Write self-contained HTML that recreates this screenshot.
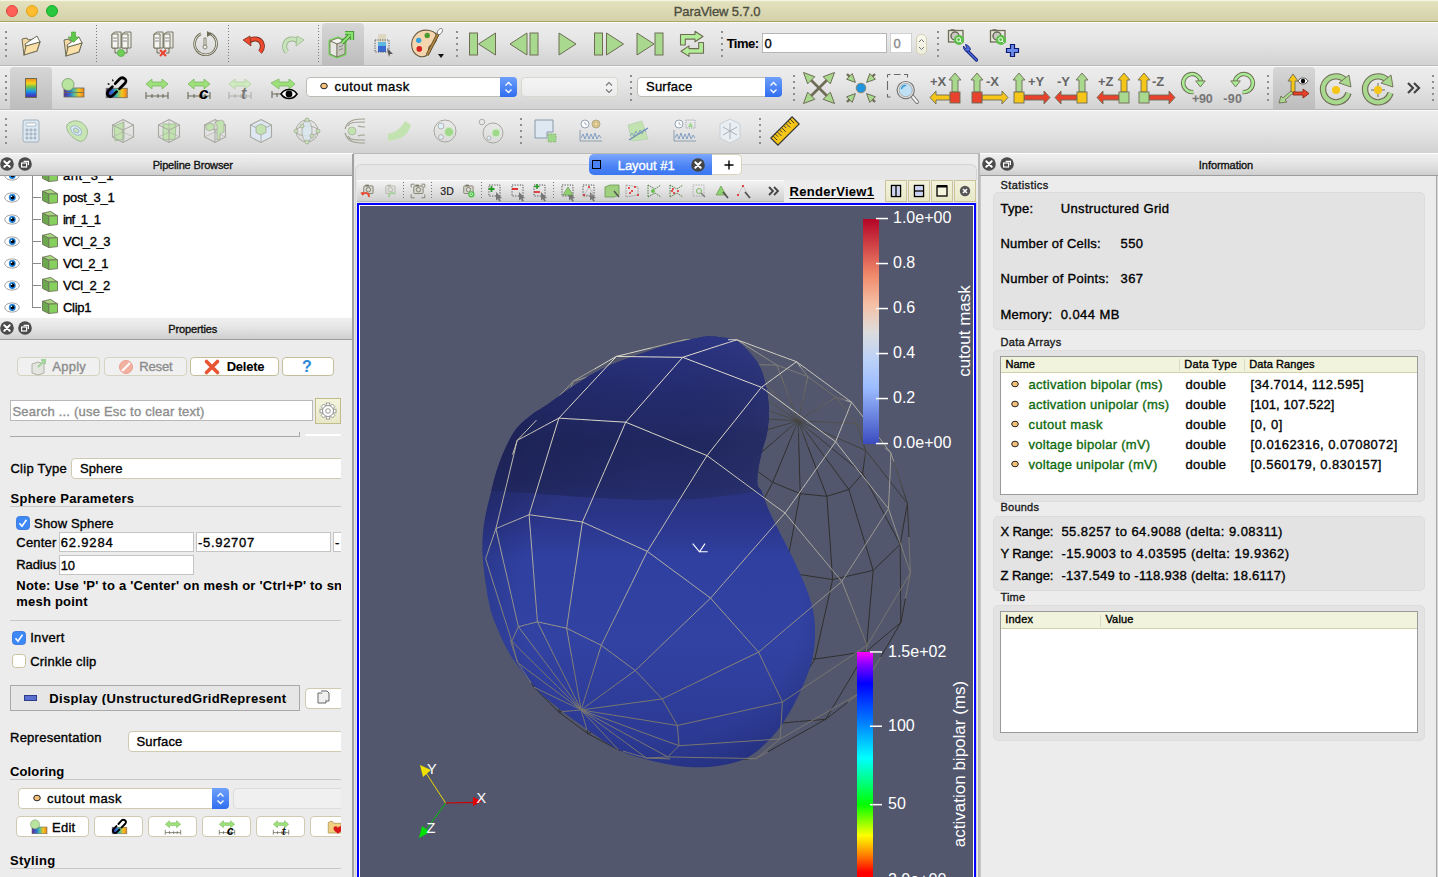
<!DOCTYPE html>
<html><head><meta charset="utf-8"><title>ParaView 5.7.0</title>
<style>
html,body{margin:0;padding:0;}
body{width:1438px;height:877px;overflow:hidden;position:relative;background:#ececec;font-family:"Liberation Sans", sans-serif;}
.t{position:absolute;white-space:pre;-webkit-text-stroke:0.35px currentColor;}
.r{position:absolute;box-sizing:border-box;}
.s{position:absolute;overflow:visible;}
</style></head><body>
<div class="r" style="left:0px;top:0px;width:1438px;height:22px;background:linear-gradient(#e6e4c2 0px,#e2e0bb 2px,#d3d0aa 21px);border-bottom:1px solid #aaa565;border-top:1px solid #f4f3e4;"></div>
<div class="r" style="left:6px;top:5px;width:12px;height:12px;border-radius:50%;background:#fe5f57;border:0.5px solid #e2463f;"></div>
<div class="r" style="left:26px;top:5px;width:12px;height:12px;border-radius:50%;background:#febc2e;border:0.5px solid #e1a116;"></div>
<div class="r" style="left:46px;top:5px;width:12px;height:12px;border-radius:50%;background:#28c840;border:0.5px solid #1aab29;"></div>
<div class="t" style="left:517.0px;width:400px;text-align:center;top:4.5px;font-size:13px;line-height:13px;font-weight:normal;color:#4d4d40;letter-spacing:-0.096px">ParaView 5.7.0</div>
<div class="r" style="left:0px;top:22px;width:1438px;height:44px;background:linear-gradient(#ededed,#e6e6e6 40%,#d2d2d2);border-top:1px solid #fafafa;border-bottom:1px solid #b9b9b9;"></div>
<div class="r" style="left:0px;top:66px;width:1438px;height:44px;background:linear-gradient(#ededed,#e6e6e6 40%,#d2d2d2);border-top:1px solid #fafafa;border-bottom:1px solid #b9b9b9;"></div>
<div class="r" style="left:0px;top:110px;width:1438px;height:44px;background:linear-gradient(#ededed,#e6e6e6 40%,#d2d2d2);border-top:1px solid #fafafa;border-bottom:1px solid #b9b9b9;"></div>
<div class="r" style="left:5px;top:31px;width:2.4px;height:2.4px;background:#8e8e8e;"></div>
<div class="r" style="left:5px;top:37px;width:2.4px;height:2.4px;background:#8e8e8e;"></div>
<div class="r" style="left:5px;top:43px;width:2.4px;height:2.4px;background:#8e8e8e;"></div>
<div class="r" style="left:5px;top:49px;width:2.4px;height:2.4px;background:#8e8e8e;"></div>
<div class="r" style="left:5px;top:55px;width:2.4px;height:2.4px;background:#8e8e8e;"></div>
<div class="r" style="left:456px;top:31px;width:2.4px;height:2.4px;background:#8e8e8e;"></div>
<div class="r" style="left:456px;top:37px;width:2.4px;height:2.4px;background:#8e8e8e;"></div>
<div class="r" style="left:456px;top:43px;width:2.4px;height:2.4px;background:#8e8e8e;"></div>
<div class="r" style="left:456px;top:49px;width:2.4px;height:2.4px;background:#8e8e8e;"></div>
<div class="r" style="left:456px;top:55px;width:2.4px;height:2.4px;background:#8e8e8e;"></div>
<div class="r" style="left:721px;top:31px;width:2.4px;height:2.4px;background:#8e8e8e;"></div>
<div class="r" style="left:721px;top:37px;width:2.4px;height:2.4px;background:#8e8e8e;"></div>
<div class="r" style="left:721px;top:43px;width:2.4px;height:2.4px;background:#8e8e8e;"></div>
<div class="r" style="left:721px;top:49px;width:2.4px;height:2.4px;background:#8e8e8e;"></div>
<div class="r" style="left:721px;top:55px;width:2.4px;height:2.4px;background:#8e8e8e;"></div>
<div class="r" style="left:937px;top:31px;width:2.4px;height:2.4px;background:#8e8e8e;"></div>
<div class="r" style="left:937px;top:37px;width:2.4px;height:2.4px;background:#8e8e8e;"></div>
<div class="r" style="left:937px;top:43px;width:2.4px;height:2.4px;background:#8e8e8e;"></div>
<div class="r" style="left:937px;top:49px;width:2.4px;height:2.4px;background:#8e8e8e;"></div>
<div class="r" style="left:937px;top:55px;width:2.4px;height:2.4px;background:#8e8e8e;"></div>
<div class="r" style="left:5px;top:75px;width:2.4px;height:2.4px;background:#8e8e8e;"></div>
<div class="r" style="left:5px;top:81px;width:2.4px;height:2.4px;background:#8e8e8e;"></div>
<div class="r" style="left:5px;top:87px;width:2.4px;height:2.4px;background:#8e8e8e;"></div>
<div class="r" style="left:5px;top:93px;width:2.4px;height:2.4px;background:#8e8e8e;"></div>
<div class="r" style="left:5px;top:99px;width:2.4px;height:2.4px;background:#8e8e8e;"></div>
<div class="r" style="left:630px;top:75px;width:2.4px;height:2.4px;background:#8e8e8e;"></div>
<div class="r" style="left:630px;top:81px;width:2.4px;height:2.4px;background:#8e8e8e;"></div>
<div class="r" style="left:630px;top:87px;width:2.4px;height:2.4px;background:#8e8e8e;"></div>
<div class="r" style="left:630px;top:93px;width:2.4px;height:2.4px;background:#8e8e8e;"></div>
<div class="r" style="left:630px;top:99px;width:2.4px;height:2.4px;background:#8e8e8e;"></div>
<div class="r" style="left:793px;top:75px;width:2.4px;height:2.4px;background:#8e8e8e;"></div>
<div class="r" style="left:793px;top:81px;width:2.4px;height:2.4px;background:#8e8e8e;"></div>
<div class="r" style="left:793px;top:87px;width:2.4px;height:2.4px;background:#8e8e8e;"></div>
<div class="r" style="left:793px;top:93px;width:2.4px;height:2.4px;background:#8e8e8e;"></div>
<div class="r" style="left:793px;top:99px;width:2.4px;height:2.4px;background:#8e8e8e;"></div>
<div class="r" style="left:1267px;top:75px;width:2.4px;height:2.4px;background:#8e8e8e;"></div>
<div class="r" style="left:1267px;top:81px;width:2.4px;height:2.4px;background:#8e8e8e;"></div>
<div class="r" style="left:1267px;top:87px;width:2.4px;height:2.4px;background:#8e8e8e;"></div>
<div class="r" style="left:1267px;top:93px;width:2.4px;height:2.4px;background:#8e8e8e;"></div>
<div class="r" style="left:1267px;top:99px;width:2.4px;height:2.4px;background:#8e8e8e;"></div>
<div class="r" style="left:1432px;top:75px;width:2.4px;height:2.4px;background:#8e8e8e;"></div>
<div class="r" style="left:1432px;top:81px;width:2.4px;height:2.4px;background:#8e8e8e;"></div>
<div class="r" style="left:1432px;top:87px;width:2.4px;height:2.4px;background:#8e8e8e;"></div>
<div class="r" style="left:1432px;top:93px;width:2.4px;height:2.4px;background:#8e8e8e;"></div>
<div class="r" style="left:1432px;top:99px;width:2.4px;height:2.4px;background:#8e8e8e;"></div>
<div class="r" style="left:5px;top:118px;width:2.4px;height:2.4px;background:#8e8e8e;"></div>
<div class="r" style="left:5px;top:124px;width:2.4px;height:2.4px;background:#8e8e8e;"></div>
<div class="r" style="left:5px;top:130px;width:2.4px;height:2.4px;background:#8e8e8e;"></div>
<div class="r" style="left:5px;top:136px;width:2.4px;height:2.4px;background:#8e8e8e;"></div>
<div class="r" style="left:5px;top:142px;width:2.4px;height:2.4px;background:#8e8e8e;"></div>
<div class="r" style="left:520px;top:118px;width:2.4px;height:2.4px;background:#8e8e8e;"></div>
<div class="r" style="left:520px;top:124px;width:2.4px;height:2.4px;background:#8e8e8e;"></div>
<div class="r" style="left:520px;top:130px;width:2.4px;height:2.4px;background:#8e8e8e;"></div>
<div class="r" style="left:520px;top:136px;width:2.4px;height:2.4px;background:#8e8e8e;"></div>
<div class="r" style="left:520px;top:142px;width:2.4px;height:2.4px;background:#8e8e8e;"></div>
<div class="r" style="left:759px;top:118px;width:2.4px;height:2.4px;background:#8e8e8e;"></div>
<div class="r" style="left:759px;top:124px;width:2.4px;height:2.4px;background:#8e8e8e;"></div>
<div class="r" style="left:759px;top:130px;width:2.4px;height:2.4px;background:#8e8e8e;"></div>
<div class="r" style="left:759px;top:136px;width:2.4px;height:2.4px;background:#8e8e8e;"></div>
<div class="r" style="left:759px;top:142px;width:2.4px;height:2.4px;background:#8e8e8e;"></div>
<div class="r" style="left:96px;top:25px;width:1px;height:38px;background:repeating-linear-gradient(#7a7a7a 0 1px,transparent 1px 3px);"></div>
<div class="r" style="left:228px;top:25px;width:1px;height:38px;background:repeating-linear-gradient(#7a7a7a 0 1px,transparent 1px 3px);"></div>
<div class="r" style="left:318px;top:25px;width:1px;height:38px;background:repeating-linear-gradient(#7a7a7a 0 1px,transparent 1px 3px);"></div>
<div class="r" style="left:322px;top:23px;width:42px;height:42px;background:linear-gradient(#d6d6d6,#bdbdbd);border-radius:4px 4px 0 0;"></div>
<div class="r" style="left:10px;top:67px;width:42px;height:42px;background:linear-gradient(#d6d6d6,#bdbdbd);border-radius:4px 4px 0 0;"></div>
<div class="r" style="left:1273px;top:67px;width:42px;height:42px;background:linear-gradient(#d6d6d6,#bdbdbd);border-radius:4px 4px 0 0;"></div>
<svg class="s" style="left:15.0px;top:29.0px;" width="32" height="32" viewBox="0 0 32 32"><g transform="translate(16.0,16.0)"><path d="M-9 -6L-4 -7L-3 -5L3 -6L3 4L-7 10Z" fill="#f3d9a3" stroke="#6e6c55" stroke-width="1"/><path d="M-6 -1L6 -9L9 -3L-5 3Z" fill="#fff" stroke="#6e6c55" stroke-width="1"/><path d="M-7 10L-5 1L9 -3L6 6Z" fill="#fbe0a8" stroke="#6e6c55" stroke-width="1.1"/></g></svg>
<svg class="s" style="left:57.0px;top:30.0px;" width="32" height="32" viewBox="0 0 32 32"><g transform="translate(16.0,16.0)"><path d="M-9 -6L-4 -7L-3 -5L3 -6L3 4L-7 10Z" fill="#f3d9a3" stroke="#6e6c55" stroke-width="1"/><path d="M-6 -1L6 -9L9 -3L-5 3Z" fill="#fff" stroke="#6e6c55" stroke-width="1"/><path d="M-7 10L-5 1L9 -3L6 6Z" fill="#fbe0a8" stroke="#6e6c55" stroke-width="1.1"/><path d="M-1.5 -14H2.5V-9H6L0.5 -3.5L-5 -9H-1.5Z" fill="#5fc84a" stroke="#4aa035" stroke-width="0.6"/></g></svg>
<svg class="s" style="left:105.0px;top:28.0px;" width="32" height="32" viewBox="0 0 32 32"><g transform="translate(16.0,16.0)"><g><path d="M-9 -10L-6 -12H0V4H-9Z" fill="#e8e8e4" stroke="#6e6c55" stroke-width="0.9"/><path d="M-9 -10H-3V4H-9Z" fill="#f4f4f0" stroke="#6e6c55" stroke-width="0.9"/><path d="M-8 -6H-4M-8 -3H-4" stroke="#777" stroke-width="0.8"/><path d="M1 -10L4 -12H10V4H1Z" fill="#e8e8e4" stroke="#6e6c55" stroke-width="0.9"/><path d="M1 -10H7V4H1Z" fill="#f4f4f0" stroke="#6e6c55" stroke-width="0.9"/><path d="M2 -6H6M2 -3H6" stroke="#777" stroke-width="0.8"/><path d="M-6 4V9H-3M3 9H6V4" stroke="#6e6c55" stroke-width="1" fill="none"/></g><circle cx="0" cy="9" r="3.6" fill="#6fcf5a" stroke="#4aa035" stroke-width="0.6"/></g></svg>
<svg class="s" style="left:147.0px;top:28.0px;" width="32" height="32" viewBox="0 0 32 32"><g transform="translate(16.0,16.0)"><g><path d="M-9 -10L-6 -12H0V4H-9Z" fill="#e8e8e4" stroke="#6e6c55" stroke-width="0.9"/><path d="M-9 -10H-3V4H-9Z" fill="#f4f4f0" stroke="#6e6c55" stroke-width="0.9"/><path d="M-8 -6H-4M-8 -3H-4" stroke="#777" stroke-width="0.8"/><path d="M1 -10L4 -12H10V4H1Z" fill="#e8e8e4" stroke="#6e6c55" stroke-width="0.9"/><path d="M1 -10H7V4H1Z" fill="#f4f4f0" stroke="#6e6c55" stroke-width="0.9"/><path d="M2 -6H6M2 -3H6" stroke="#777" stroke-width="0.8"/><path d="M-6 4V9H-3M3 9H6V4" stroke="#6e6c55" stroke-width="1" fill="none"/></g><path d="M-3 6L3 12M3 6L-3 12" stroke="#e8412c" stroke-width="2"/></g></svg>
<svg class="s" style="left:189.0px;top:28.0px;" width="32" height="32" viewBox="0 0 32 32"><g transform="translate(16.0,16.0)"><path d="M4.5 -10.5A11 11 0 1 1 -4 -10.2" fill="none" stroke="#6e6c55" stroke-width="2.6"/><path d="M4.5 -10.5A11 11 0 1 1 -4 -10.2" fill="none" stroke="#e4e4dc" stroke-width="1"/><path d="M2 -13L7 -10L2 -7Z" fill="#6e6c55"/><path d="M-1 -6H1V2H-1Z" fill="#f0f0ea" stroke="#6e6c55" stroke-width="0.8"/><circle cx="0" cy="3" r="2" fill="#f0f0ea" stroke="#6e6c55" stroke-width="0.8"/></g></svg>
<svg class="s" style="left:237.0px;top:28.0px;" width="32" height="32" viewBox="0 0 32 32"><g transform="translate(16.0,16.0)"><path d="M7 8C11 4 10 -4 3 -5C-1 -5.5 -4 -3 -5 -1" fill="none" stroke="#7a3020" stroke-width="5"/><path d="M7 8C11 4 10 -4 3 -5C-1 -5.5 -4 -3 -5 -1" fill="none" stroke="#f04a30" stroke-width="3.2"/><path d="M-10 -4L-3 -8L-2 2Z" fill="#f04a30" stroke="#7a3020" stroke-width="0.8"/></g></svg>
<svg class="s" style="left:278.0px;top:28.0px;" width="32" height="32" viewBox="0 0 32 32"><g transform="translate(16.0,16.0)"><g transform="scale(-1,1)"><path d="M7 8C11 4 10 -4 3 -5C-1 -5.5 -4 -3 -5 -1" fill="none" stroke="#9ab890" stroke-width="5"/><path d="M7 8C11 4 10 -4 3 -5C-1 -5.5 -4 -3 -5 -1" fill="none" stroke="#c9e4bb" stroke-width="3.2"/><path d="M-10 -4L-3 -8L-2 2Z" fill="#c9e4bb" stroke="#9ab890" stroke-width="0.8"/></g></g></svg>
<svg class="s" style="left:326.0px;top:28.0px;" width="32" height="32" viewBox="0 0 32 32"><g transform="translate(16.0,16.0)"><path d="M-12 -3L-4 -6L3 -3V10L-5 13L-12 10Z" fill="none" stroke="#7ad860" stroke-width="3.2" stroke-linejoin="round"/><path d="M-12 -3L-4 -6L3 -3L-5 0Z" fill="#f4f4f0" stroke="#6e6c55" stroke-width="0.8"/><path d="M-12 -3L-5 0V13L-12 10Z" fill="#e8e8e2" stroke="#6e6c55" stroke-width="0.8"/><path d="M-5 0L3 -3V10L-5 13Z" fill="#c8c8c0" stroke="#6e6c55" stroke-width="0.8"/><path d="M-3 3L1 1.5M-3 6L1 4.5" stroke="#777" stroke-width="0.8"/><path d="M0 -1L8 -9M3 -11H10V-4" stroke="#3c8a2c" stroke-width="4.2" fill="none"/><path d="M0 -1L8 -9M3 -11H10V-4" stroke="#8ae070" stroke-width="2.4" fill="none"/></g></svg>
<svg class="s" style="left:368.0px;top:28.0px;" width="32" height="32" viewBox="0 0 32 32"><g transform="translate(16.0,16.0)"><rect x="-6" y="-10" width="8" height="18" fill="url(#none)" stroke="none"/><path d="M-6 -10H2V-2H-6Z" fill="#ddd6c0"/><path d="M-6 -2H2V8H-6Z" fill="#3a6ad0"/><path d="M-6 -2H2V2H-6Z" fill="#5bb8e0"/><path d="M-9 -4H5V8H-9Z" fill="none" stroke="#555" stroke-width="1" stroke-dasharray="1.2 1.2"/><path d="M3 4L9 10L6 10L5 13Z" fill="#555"/></g></svg>
<svg class="s" style="left:410.0px;top:28.0px;" width="32" height="32" viewBox="0 0 32 32"><g transform="translate(16.0,16.0)"><g transform="scale(1.22)"><path d="M3 -11C-7 -13 -13 -5 -11.5 3C-10 10 -3 12 1 9C4 6 0 3 4 1C9 -1 12 -9 3 -11Z" fill="#f4d6ae" stroke="#6a5a40" stroke-width="0.9"/><circle cx="-6" cy="-3" r="2.2" fill="#35a0e0"/><circle cx="1" cy="-7" r="2.2" fill="#4a9a30"/><circle cx="-5.5" cy="4" r="2.3" fill="#d82020"/><path d="M10.5 -9.5L1 9" stroke="#5a4020" stroke-width="2.6"/><path d="M10.5 -9.5L1 9" stroke="#b08a40" stroke-width="1.4"/><path d="M9 -9C10 -13 14 -14 13.5 -11C13 -9 12 -8 10.5 -7.5Z" fill="#fff" stroke="#666" stroke-width="0.7"/></g><path d="M12 10L18 10L15 14Z" fill="#111"/></g></svg>
<svg class="s" style="left:466.0px;top:28.0px;" width="32" height="32" viewBox="0 0 32 32"><g transform="translate(16.0,16.0)"><rect x="-12.5" y="-11" width="8" height="22" fill="#a9d98e" stroke="#6e6c55" stroke-width="1"/><path d="M13.5 -11V11L-3.5 0Z" fill="#a9d98e" stroke="#6e6c55" stroke-width="1"/></g></svg>
<svg class="s" style="left:508.0px;top:28.0px;" width="32" height="32" viewBox="0 0 32 32"><g transform="translate(16.0,16.0)"><path d="M3 -11V11L-14 0Z" fill="#a9d98e" stroke="#6e6c55" stroke-width="1"/><rect x="6" y="-11" width="8" height="22" fill="#a9d98e" stroke="#6e6c55" stroke-width="1"/></g></svg>
<svg class="s" style="left:552.0px;top:28.0px;" width="32" height="32" viewBox="0 0 32 32"><g transform="translate(16.0,16.0)"><path d="M-9 -11V11L8 0Z" fill="#a9d98e" stroke="#6e6c55" stroke-width="1"/></g></svg>
<svg class="s" style="left:592.0px;top:28.0px;" width="32" height="32" viewBox="0 0 32 32"><g transform="translate(16.0,16.0)"><rect x="-13.5" y="-11" width="8" height="22" fill="#a9d98e" stroke="#6e6c55" stroke-width="1"/><path d="M-1.5 -11V11L15.5 0Z" fill="#a9d98e" stroke="#6e6c55" stroke-width="1"/></g></svg>
<svg class="s" style="left:634.0px;top:28.0px;" width="32" height="32" viewBox="0 0 32 32"><g transform="translate(16.0,16.0)"><path d="M-13 -11V11L4 0Z" fill="#a9d98e" stroke="#6e6c55" stroke-width="1"/><rect x="5" y="-11" width="8" height="22" fill="#a9d98e" stroke="#6e6c55" stroke-width="1"/></g></svg>
<svg class="s" style="left:670px;top:24px;" width="60" height="40" viewBox="0 0 60 40"><path d="M10.5 21V10.5H25V7.2L33 12.5L25 17.8V15.1H15.3V21Z" fill="#b2ec98" stroke="#6e6c55" stroke-width="1.1" stroke-linejoin="round"/><path d="M33.5 18.5V29.2H19V32.4L11 27.2L19 21.9V24.6H28.7V18.5Z" fill="#b2ec98" stroke="#6e6c55" stroke-width="1.1" stroke-linejoin="round"/></svg>
<div class="t" style="left:726.7px;top:37.0px;font-size:13px;line-height:13px;font-weight:bold;color:#000;letter-spacing:-0.534px;-webkit-text-stroke:0.05px currentColor;">Time:</div>
<div class="r" style="left:762px;top:33px;width:125px;height:20px;background:#fff;border:1px solid #b5b5b5;"></div>
<div class="t" style="left:764.5px;top:37.0px;font-size:13px;line-height:13px;font-weight:normal;color:#000;letter-spacing:0px;">0</div>
<div class="r" style="left:890px;top:33px;width:22px;height:20px;background:#fff;border:1px solid #d0d0d0;"></div>
<div class="t" style="left:893.5px;top:37.0px;font-size:13px;line-height:13px;font-weight:normal;color:#888;letter-spacing:0px;">0</div>
<div class="r" style="left:916px;top:34px;width:11px;height:21px;background:linear-gradient(#f8f8ee,#eeeedc);border:1px solid #d4d0b0;border-radius:5px;"></div>
<svg class="s" style="left:916px;top:34px;" width="11" height="21" viewBox="0 0 11 21"><path d="M3 8L5.5 5.5L8 8M3 13L5.5 15.5L8 13" stroke="#777" stroke-width="1" fill="none"/></svg>
<svg class="s" style="left:948px;top:30px;" width="32" height="30" viewBox="0 0 32 30"><rect x="0.5" y="0.5" width="14.5" height="11.5" fill="#e8e8e0" stroke="#6e6c55" stroke-width="1.3"/><rect x="2.5" y="-0.8" width="4" height="1.6" fill="#6e6c55"/><circle cx="7" cy="6" r="4" fill="#c8c8c0" stroke="#6a6a5a" stroke-width="1.5"/><circle cx="11" cy="10" r="5" fill="#5cc048"/><circle cx="10.6" cy="9.6" r="2" fill="none" stroke="#fff" stroke-width="1"/><path d="M12 11L13.8 12.8" stroke="#fff" stroke-width="1"/><path d="M18 19.5L28.5 30" stroke="#14207a" stroke-width="3.2" stroke-linecap="round"/><path d="M18 19.5L28.5 30" stroke="#4a6ad8" stroke-width="1.6" stroke-linecap="round"/><path d="M15.5 16C15 19 17.5 22 20.5 21.5L22.5 19.5C22 17 20 15 17.5 14.5L18.5 17.5L17.5 18.5Z" fill="#4a6ad8" stroke="#14207a" stroke-width="0.9"/></svg>
<svg class="s" style="left:990px;top:30px;" width="32" height="30" viewBox="0 0 32 30"><rect x="0.5" y="0.5" width="14.5" height="11.5" fill="#e8e8e0" stroke="#6e6c55" stroke-width="1.3"/><rect x="2.5" y="-0.8" width="4" height="1.6" fill="#6e6c55"/><circle cx="7" cy="6" r="4" fill="#c8c8c0" stroke="#6a6a5a" stroke-width="1.5"/><circle cx="11" cy="10" r="5" fill="#5cc048"/><circle cx="10.6" cy="9.6" r="2" fill="none" stroke="#fff" stroke-width="1"/><path d="M12 11L13.8 12.8" stroke="#fff" stroke-width="1"/><path d="M20.5 14.5H24.5V18.5H28.5V22.5H24.5V26.5H20.5V22.5H16.5V18.5H20.5Z" fill="#6a8ae8" stroke="#0e1a70" stroke-width="1.2"/></svg>
<svg class="s" style="left:0px;top:0px;" width="1" height="1" viewBox="0 0 1 1"><defs><linearGradient id="rbw" x1="0" y1="0" x2="0" y2="1"><stop offset="0" stop-color="#f28a1c"/><stop offset="0.25" stop-color="#f5d41a"/><stop offset="0.45" stop-color="#6cc24a"/><stop offset="0.65" stop-color="#1aa0e0"/><stop offset="0.85" stop-color="#2e4ed0"/><stop offset="1" stop-color="#5a2a9a"/></linearGradient><linearGradient id="rbh" x1="0" y1="0" x2="1" y2="0"><stop offset="0" stop-color="#5a2a9a"/><stop offset="0.3" stop-color="#2e6ed0"/><stop offset="0.5" stop-color="#4ac0a0"/><stop offset="0.75" stop-color="#f5c41a"/><stop offset="1" stop-color="#f2801c"/></linearGradient></defs></svg>
<svg class="s" style="left:14.5px;top:72.0px;" width="32" height="32" viewBox="0 0 32 32"><g transform="translate(16.0,16.0)"><rect x="-5.5" y="-9.5" width="11" height="19" fill="url(#rbw)" stroke="#6e6c55" stroke-width="1"/></g></svg>
<svg class="s" style="left:56.0px;top:72.0px;" width="32" height="32" viewBox="0 0 32 32"><g transform="translate(16.0,16.0)"><rect x="-8" y="0" width="20" height="9" fill="url(#rbh)" stroke="#6e6c55" stroke-width="0.8"/><path d="M-8 4.5H12" stroke="#6e6c55" stroke-width="0.8"/><circle cx="-4" cy="-3.5" r="6" fill="#b8e4a0" stroke="#7a9a6a" stroke-width="0.8"/></g></svg>
<svg class="s" style="left:100.0px;top:72.0px;" width="32" height="32" viewBox="0 0 32 32"><g transform="translate(16.0,16.0)"><rect x="-9.8" y="0.3" width="21" height="9.4" fill="url(#rbh)" stroke="#6e6c55" stroke-width="0.8"/><path d="M-0.8 -4.3L3.5 -9C6.5 -12 12 -8.5 9.2 -5L3.5 0.8" stroke="#000" stroke-width="2.7" fill="none" stroke-linecap="round"/><path d="M-3.6 -1.3L-7.8 3C-10.5 6.5 -6 10.5 -3 7.2L0.6 3.6" stroke="#000" stroke-width="2.7" fill="none" stroke-linecap="round"/><path d="M-8.3 -4.4L-6.5 -3.6M-3.6 -8.6L-2.8 -6.8" stroke="#000" stroke-width="1.2"/></g></svg>
<svg class="s" style="left:141.0px;top:72.0px;" width="32" height="32" viewBox="0 0 32 32"><g transform="translate(16.0,16.0)"><path d="M-11 -4L-5 -9V-6H5V-9L11 -4L5 1V-2H-5V1Z" fill="#9ee07a" stroke="#7ab860" stroke-width="0.8"/><path d="M-11 8H11M-11 4V11M-5 6V10M1 6V10M6 6V10M11 4V11" stroke="#6a6a5a" stroke-width="1.1" fill="none"/></g></svg>
<svg class="s" style="left:183.0px;top:72.0px;" width="32" height="32" viewBox="0 0 32 32"><g transform="translate(16.0,16.0)"><path d="M-11 -4L-5 -9V-6H5V-9L11 -4L5 1V-2H-5V1Z" fill="#9ee07a" stroke="#7ab860" stroke-width="0.8"/><path d="M-11 8H11M-11 4V11M-5 6V10M1 6V10M6 6V10M11 4V11" stroke="#6a6a5a" stroke-width="1.1" fill="none"/><text x="0" y="11" font-family="Liberation Sans" font-size="17" font-weight="bold" font-style="italic" fill="#000">c</text></g></svg>
<svg class="s" style="left:224.0px;top:72.0px;" width="32" height="32" viewBox="0 0 32 32"><g transform="translate(16.0,16.0)"><path d="M-11 -4L-5 -9V-6H5V-9L11 -4L5 1V-2H-5V1Z" fill="#cfeabf" stroke="#b0d0a0" stroke-width="0.8"/><path d="M-11 8H11M-11 4V11M-5 6V10M1 6V10M6 6V10M11 4V11" stroke="#b0b0a8" stroke-width="1.1" fill="none"/><text x="1" y="11" font-family="Liberation Sans" font-size="16" font-weight="bold" font-style="italic" fill="#777">t</text></g></svg>
<svg class="s" style="left:268.0px;top:72.0px;" width="32" height="32" viewBox="0 0 32 32"><g transform="translate(16.0,16.0)"><path d="M-13 -5L-5 -9V-6H5V-9L11 -4L5 1V-2H-5V1Z" fill="#9ee07a" stroke="#7ab860" stroke-width="0.8"/><path d="M-12 6H-3M-12 3V10M-7 5V9" stroke="#6a6a5a" stroke-width="1.1" fill="none"/><path d="M-3 6C1 0 9 0 13 6C9 12 1 12 -3 6Z" fill="#fff" stroke="#000" stroke-width="1.6"/><circle cx="5" cy="6" r="3.4" fill="#000"/></g></svg>
<div class="r" style="left:306px;top:77px;width:211px;height:20px;background:#fff;border:1px solid #bdbdb5;border-radius:4px;"></div>
<div class="r" style="left:500px;top:77px;width:17px;height:20px;background:linear-gradient(#6da0fb,#2f6df0);border-radius:0 4px 4px 0;"></div>
<svg class="s" style="left:502px;top:79px;" width="13" height="16" viewBox="0 0 13 16"><path d="M3.5 6.5L6.5 3.5L9.5 6.5M3.5 10.5L6.5 13.5L9.5 10.5" stroke="#fff" stroke-width="1.3" fill="none"/></svg>
<svg class="s" style="left:319px;top:81px;" width="10" height="10" viewBox="0 0 10 10"><ellipse cx="5" cy="5" rx="3.3" ry="2.8" fill="#f6c27a" stroke="#222" stroke-width="1"/></svg>
<div class="t" style="left:334.5px;top:79.7px;font-size:13px;line-height:13px;font-weight:normal;color:#000;letter-spacing:0.461px;">cutout mask</div>
<div class="r" style="left:521px;top:77px;width:97px;height:20px;background:linear-gradient(#f4f4f4,#ececec);border:1px solid #d8d8d0;border-radius:4px;"></div>
<svg class="s" style="left:603px;top:79px;" width="12" height="16" viewBox="0 0 12 16"><path d="M3 6.5L6 3.5L9 6.5M3 10.5L6 13.5L9 10.5" stroke="#777" stroke-width="1.1" fill="none"/></svg>
<div class="r" style="left:637px;top:77px;width:145px;height:20px;background:#fff;border:1px solid #bdbdb5;border-radius:4px;"></div>
<div class="r" style="left:765px;top:77px;width:17px;height:20px;background:linear-gradient(#6da0fb,#2f6df0);border-radius:0 4px 4px 0;"></div>
<svg class="s" style="left:767px;top:79px;" width="13" height="16" viewBox="0 0 13 16"><path d="M3.5 6.5L6.5 3.5L9.5 6.5M3.5 10.5L6.5 13.5L9.5 10.5" stroke="#fff" stroke-width="1.3" fill="none"/></svg>
<div class="t" style="left:646.0px;top:79.7px;font-size:13px;line-height:13px;font-weight:normal;color:#000;letter-spacing:0.231px;">Surface</div>
<svg class="s" style="left:801.3px;top:69.8px;" width="36" height="36" viewBox="0 0 36 36"><g transform="translate(18.0,18.0)"><path d="M-10 -10L10 10M10 -10L-10 10" stroke="#6e6c55" stroke-width="2.6"/><path d="M-15.5 -15.5L-4.2 -11.3L-11.3 -4.2Z" fill="#a9d98e" stroke="#6e6c55" stroke-width="1" stroke-linejoin="round"/><path d="M-15.5 15.5L-11.3 4.2L-4.2 11.3Z" fill="#a9d98e" stroke="#6e6c55" stroke-width="1" stroke-linejoin="round"/><path d="M15.5 -15.5L11.3 -4.2L4.2 -11.3Z" fill="#a9d98e" stroke="#6e6c55" stroke-width="1" stroke-linejoin="round"/><path d="M15.5 15.5L4.2 11.3L11.3 4.2Z" fill="#a9d98e" stroke="#6e6c55" stroke-width="1" stroke-linejoin="round"/></g></svg>
<svg class="s" style="left:843.0px;top:69.8px;" width="36" height="36" viewBox="0 0 36 36"><g transform="translate(18.0,18.0)"><path d="M-14 -14L-10 -10" stroke="#6e6c55" stroke-width="2.4"/><path d="M-5.6 -5.6L-14.4 -8.8L-8.8 -14.4Z" fill="#a9d98e" stroke="#6e6c55" stroke-width="1" stroke-linejoin="round"/><path d="M-14 14L-10 10" stroke="#6e6c55" stroke-width="2.4"/><path d="M-5.6 5.6L-8.8 14.4L-14.4 8.8Z" fill="#a9d98e" stroke="#6e6c55" stroke-width="1" stroke-linejoin="round"/><path d="M14 -14L10 -10" stroke="#6e6c55" stroke-width="2.4"/><path d="M5.6 -5.6L8.8 -14.4L14.4 -8.8Z" fill="#a9d98e" stroke="#6e6c55" stroke-width="1" stroke-linejoin="round"/><path d="M14 14L10 10" stroke="#6e6c55" stroke-width="2.4"/><path d="M5.6 5.6L14.4 8.8L8.8 14.4Z" fill="#a9d98e" stroke="#6e6c55" stroke-width="1" stroke-linejoin="round"/><circle cx="0" cy="0" r="4.8" fill="#2196e0" stroke="#8a7a50" stroke-width="0.8"/></g></svg>
<svg class="s" style="left:880.0px;top:70.0px;" width="40" height="36" viewBox="0 0 40 36"><g transform="translate(20.0,18.0)"><path d="M-12.5 -13.5H-9.5M-6 -13.5H0.5M4 -13.5H7.5V-10.5M-12.5 -13.5V-10.5M-12.5 -7V2M-12.5 6V9H-9.5" stroke="#6a6a6a" stroke-width="1.1" fill="none"/><path d="M12.5 8.5L17 14" stroke="#777" stroke-width="4" stroke-linecap="round"/><path d="M12.5 8.5L17 14" stroke="#f4f4f4" stroke-width="2" stroke-linecap="round"/><circle cx="5.7" cy="2.1" r="8.6" fill="#eee" stroke="#777" stroke-width="1.2"/><circle cx="5.7" cy="2.1" r="6.6" fill="#bfe0f4" stroke="#999" stroke-width="0.8"/><path d="M1.5 1A4.5 4.5 0 0 1 6 -2.5" stroke="#2a9ae0" stroke-width="1.6" fill="none"/></g></svg>
<svg class="s" style="left:924.0px;top:70.0px;" width="44" height="36" viewBox="0 0 44 36"><g transform="translate(22.0,18.0)"><path d="M6 4V-8H3L9 -15L15 -8H12V4Z" fill="#a9d98e" stroke="#6e6c55" stroke-width="0.9"/><path d="M4 7H-10V3L-16 9.5L-10 16V12H4Z" fill="#f5c518" stroke="#6e6c55" stroke-width="0.9"/><rect x="4" y="4" width="10" height="11" fill="#e8412c" stroke="#6e6c55" stroke-width="0.9"/><text x="-16" y="-2" font-family="Liberation Sans" font-size="13" font-weight="bold" fill="#666">+X</text></g></svg>
<svg class="s" style="left:964.0px;top:70.0px;" width="44" height="36" viewBox="0 0 44 36"><g transform="translate(22.0,18.0)"><path d="M-12 4V-8H-15L-9 -15L-3 -8H-6V4Z" fill="#a9d98e" stroke="#6e6c55" stroke-width="0.9"/><path d="M-4 7H16V3L22 9.5L16 16V12H-4Z" fill="#f5c518" stroke="#6e6c55" stroke-width="0.9"/><rect x="-14" y="4" width="10" height="11" fill="#e8412c" stroke="#6e6c55" stroke-width="0.9"/><text x="0" y="-2" font-family="Liberation Sans" font-size="13" font-weight="bold" fill="#666">-X</text></g></svg>
<svg class="s" style="left:1006.0px;top:70.0px;" width="44" height="36" viewBox="0 0 44 36"><g transform="translate(22.0,18.0)"><path d="M-12 4V-8H-15L-9 -15L-3 -8H-6V4Z" fill="#a9d98e" stroke="#6e6c55" stroke-width="0.9"/><path d="M-4 7H16V3L22 9.5L16 16V12H-4Z" fill="#e8412c" stroke="#6e6c55" stroke-width="0.9"/><rect x="-14" y="4" width="10" height="11" fill="#f5c518" stroke="#6e6c55" stroke-width="0.9"/><text x="0" y="-2" font-family="Liberation Sans" font-size="13" font-weight="bold" fill="#666">+Y</text></g></svg>
<svg class="s" style="left:1049.0px;top:70.0px;" width="44" height="36" viewBox="0 0 44 36"><g transform="translate(22.0,18.0)"><path d="M8 4V-8H5L11 -15L17 -8H14V4Z" fill="#a9d98e" stroke="#6e6c55" stroke-width="0.9"/><path d="M6 7H-10V3L-16 9.5L-10 16V12H6Z" fill="#e8412c" stroke="#6e6c55" stroke-width="0.9"/><rect x="6" y="4" width="10" height="11" fill="#f5c518" stroke="#6e6c55" stroke-width="0.9"/><text x="-14" y="-2" font-family="Liberation Sans" font-size="13" font-weight="bold" fill="#666">-Y</text></g></svg>
<svg class="s" style="left:1091.0px;top:70.0px;" width="44" height="36" viewBox="0 0 44 36"><g transform="translate(22.0,18.0)"><path d="M8 4V-8H5L11 -15L17 -8H14V4Z" fill="#f5c518" stroke="#6e6c55" stroke-width="0.9"/><path d="M6 7H-10V3L-16 9.5L-10 16V12H6Z" fill="#e8412c" stroke="#6e6c55" stroke-width="0.9"/><rect x="6" y="4" width="10" height="11" fill="#a9d98e" stroke="#6e6c55" stroke-width="0.9"/><text x="-15" y="-2" font-family="Liberation Sans" font-size="13" font-weight="bold" fill="#666">+Z</text></g></svg>
<svg class="s" style="left:1131.0px;top:70.0px;" width="44" height="36" viewBox="0 0 44 36"><g transform="translate(22.0,18.0)"><path d="M-12 4V-8H-15L-9 -15L-3 -8H-6V4Z" fill="#f5c518" stroke="#6e6c55" stroke-width="0.9"/><path d="M-4 7H16V3L22 9.5L16 16V12H-4Z" fill="#e8412c" stroke="#6e6c55" stroke-width="0.9"/><rect x="-14" y="4" width="10" height="11" fill="#a9d98e" stroke="#6e6c55" stroke-width="0.9"/><text x="-1" y="-2" font-family="Liberation Sans" font-size="13" font-weight="bold" fill="#666">-Z</text></g></svg>
<svg class="s" style="left:1176.3px;top:66.7px;" width="32" height="32" viewBox="0 0 32 32"><g transform="translate(16.0,16.0)"><path d="M9 -1.5A9 9 0 1 0 1.3 9" fill="none" stroke="#6e6c55" stroke-width="4.4"/><path d="M9 -1.5A9 9 0 1 0 1.3 9" fill="none" stroke="#a8ec94" stroke-width="2.6"/><path d="M3.7 -2.1L13.2 -2.1L8.4 3.9Z" fill="#a8ec94" stroke="#6e6c55" stroke-width="0.9" stroke-linejoin="round"/></g></svg>
<svg class="s" style="left:1227.7px;top:66.7px;" width="32" height="32" viewBox="0 0 32 32"><g transform="translate(16.0,16.0)"><g transform="scale(-1,1)"><path d="M9 -1.5A9 9 0 1 0 1.3 9" fill="none" stroke="#6e6c55" stroke-width="4.4"/><path d="M9 -1.5A9 9 0 1 0 1.3 9" fill="none" stroke="#a8ec94" stroke-width="2.6"/><path d="M3.7 -2.1L13.2 -2.1L8.4 3.9Z" fill="#a8ec94" stroke="#6e6c55" stroke-width="0.9" stroke-linejoin="round"/></g></g></svg>
<div class="t" style="left:1191.9px;top:92.9px;font-size:12.5px;line-height:12.5px;font-weight:bold;color:#777;letter-spacing:-0.152px;-webkit-text-stroke:0.05px currentColor;">+90</div>
<div class="t" style="left:1223.2px;top:92.9px;font-size:12.5px;line-height:12.5px;font-weight:bold;color:#777;letter-spacing:0.369px;-webkit-text-stroke:0.05px currentColor;">-90</div>
<svg class="s" style="left:1277.0px;top:72.0px;" width="32" height="32" viewBox="0 0 32 32"><g transform="translate(16.0,16.0)"><path d="M-2 4V-7H-5L0 -14L5 -7H2V4Z" fill="#f5c518" stroke="#6e6c55" stroke-width="0.9"/><path d="M0 4H10V1L16 5.5L10 10V7H0Z" fill="#e8412c" stroke="#8a2a1a" stroke-width="0.9"/><path d="M0 5L-8 12L-6 14L-14 15L-12 8L-10 10L-2 3Z" fill="#a9d98e" stroke="#6e6c55" stroke-width="0.9"/><path d="M5 -7C7 -11 13 -11 15 -7C13 -3 7 -3 5 -7Z" fill="#fff" stroke="#333" stroke-width="0.8"/><circle cx="10" cy="-7" r="2.2" fill="#000"/></g></svg>
<svg class="s" style="left:1318.0px;top:71.0px;" width="36" height="36" viewBox="0 0 36 36"><g transform="translate(18.0,18.0)"><path d="M10 -8A13 13 0 1 0 12.5 4" fill="none" stroke="#6e6c55" stroke-width="6.4"/><path d="M10 -8A13 13 0 1 0 12.5 4" fill="none" stroke="#a9d98e" stroke-width="4.2"/><path d="M3 -6L15 -2L13 -14Z" fill="#a9d98e" stroke="#6e6c55" stroke-width="0.9"/><circle cx="0" cy="1" r="4" fill="#f5c518"/></g></svg>
<svg class="s" style="left:1360.0px;top:71.0px;" width="36" height="36" viewBox="0 0 36 36"><g transform="translate(18.0,18.0)"><path d="M10 -8A13 13 0 1 0 12.5 4" fill="none" stroke="#6e6c55" stroke-width="6.4"/><path d="M10 -8A13 13 0 1 0 12.5 4" fill="none" stroke="#a9d98e" stroke-width="4.2"/><path d="M3 -6L15 -2L13 -14Z" fill="#a9d98e" stroke="#6e6c55" stroke-width="0.9"/><path d="M-7 1H7M0 -6V8" stroke="#6e6c55" stroke-width="1"/><circle cx="0" cy="1" r="4" fill="#f5c518"/></g></svg>
<svg class="s" style="left:1398.0px;top:72.0px;" width="32" height="32" viewBox="0 0 32 32"><g transform="translate(16.0,16.0)"><path d="M-6 -5L-1 0L-6 5M0 -5L5 0L0 5" stroke="#444" stroke-width="2.2" fill="none"/></g></svg>
<svg class="s" style="left:15.0px;top:115.0px;" width="32" height="32" viewBox="0 0 32 32"><g transform="translate(16.0,16.0)"><rect x="-8" y="-11" width="16" height="22" rx="2" fill="#dce8f2" stroke="#a0b0bc" stroke-width="1"/><rect x="-5" y="-8" width="10" height="3" rx="1" fill="#fff" stroke="#a0b0bc" stroke-width="0.8"/><circle cx="-4" cy="-1" r="1.1" fill="none" stroke="#8a9aa8" stroke-width="0.8"/><circle cx="-4" cy="3" r="1.1" fill="none" stroke="#8a9aa8" stroke-width="0.8"/><circle cx="-4" cy="7" r="1.1" fill="none" stroke="#8a9aa8" stroke-width="0.8"/><circle cx="0" cy="-1" r="1.1" fill="none" stroke="#8a9aa8" stroke-width="0.8"/><circle cx="0" cy="3" r="1.1" fill="none" stroke="#8a9aa8" stroke-width="0.8"/><circle cx="0" cy="7" r="1.1" fill="none" stroke="#8a9aa8" stroke-width="0.8"/><circle cx="4" cy="-1" r="1.1" fill="none" stroke="#8a9aa8" stroke-width="0.8"/><circle cx="4" cy="3" r="1.1" fill="none" stroke="#8a9aa8" stroke-width="0.8"/><circle cx="4" cy="7" r="1.1" fill="none" stroke="#8a9aa8" stroke-width="0.8"/></g></svg>
<svg class="s" style="left:61.0px;top:115.0px;" width="32" height="32" viewBox="0 0 32 32"><g transform="translate(16.0,16.0)"><path d="M-10 -6C-6 -12 6 -12 10 -2C12 6 6 12 2 10C-4 8 -12 0 -10 -6Z" fill="#c8e6b4" stroke="#9ab890" stroke-width="1"/><ellipse cx="-1" cy="0" rx="6" ry="4" fill="#e0eef8" stroke="#a0b8c8" transform="rotate(35)"/><ellipse cx="-1" cy="0" rx="3" ry="2" fill="#c8e6b4" stroke="#a0b8c8" transform="rotate(35)"/></g></svg>
<svg class="s" style="left:107.0px;top:115.0px;" width="32" height="32" viewBox="0 0 32 32"><g transform="translate(16.0,16.0)"><path d="M-9 -5L1 -9V8L-8 10Z" fill="#c2e2b0" stroke="#9ab890" stroke-width="0.8"/><path d="M0 -11.5L10.5 -6V6L0 11.5L-10.5 6V-6Z" fill="none" stroke="#a8a8a0" stroke-width="1.1"/><path d="M-10.5 -6L0 -1V11.5M0 -1L10.5 -6" fill="none" stroke="#a8a8a0" stroke-width="1"/><path d="M0 -11.5V1L-10.5 6M0 1L10.5 6" fill="none" stroke="#a8a8a0" stroke-width="0.7" opacity="0.8"/></g></svg>
<svg class="s" style="left:152.5px;top:115.0px;" width="32" height="32" viewBox="0 0 32 32"><g transform="translate(16.0,16.0)"><path d="M-6 -7L7 -7L6 8L-6 9Z" fill="#c2e2b0" stroke="#9ab890" stroke-width="0.8"/><path d="M0 -11.5L10.5 -6V6L0 11.5L-10.5 6V-6Z" fill="none" stroke="#a8a8a0" stroke-width="1.1"/><path d="M-10.5 -6L0 -1V11.5M0 -1L10.5 -6" fill="none" stroke="#a8a8a0" stroke-width="1"/><path d="M0 -11.5V1L-10.5 6M0 1L10.5 6" fill="none" stroke="#a8a8a0" stroke-width="0.7" opacity="0.8"/></g></svg>
<svg class="s" style="left:199.0px;top:115.0px;" width="32" height="32" viewBox="0 0 32 32"><g transform="translate(16.0,16.0)"><path d="M0 -11.5L10.5 -6V6L0 11.5L-10.5 6V-6Z" fill="none" stroke="#a8a8a0" stroke-width="1.1"/><path d="M-10.5 -6L0 -1V11.5M0 -1L10.5 -6" fill="none" stroke="#a8a8a0" stroke-width="1"/><path d="M0 -11.5V1L-10.5 6M0 1L10.5 6" fill="none" stroke="#a8a8a0" stroke-width="0.7" opacity="0.8"/><path d="M-9 -6L-4 -8L-1 -6.5V-2L-6 0L-9 -2Z" fill="#c2e2b0" stroke="#a8a8a0" stroke-width="0.8"/><path d="M0 -9L6 -11L9 -9.5V1L5 3V8L2 9V-5Z" fill="#c2e2b0" stroke="#a8a8a0" stroke-width="0.8"/></g></svg>
<svg class="s" style="left:245.0px;top:115.0px;" width="32" height="32" viewBox="0 0 32 32"><g transform="translate(16.0,16.0)"><path d="M0 -11.5L10.5 -6V6L0 11.5L-10.5 6V-6Z" fill="#dde8f2" stroke="#a8a8a0" stroke-width="1.1"/><path d="M-10.5 -6L0 -1V11.5M0 -1L10.5 -6" fill="none" stroke="#a8a8a0" stroke-width="0.9"/><path d="M0 -7L5 -4.5V1.5L0 4L-5 1.5V-4.5Z" fill="#c2e2b0" stroke="#a8a8a0" stroke-width="0.8"/></g></svg>
<svg class="s" style="left:290.5px;top:115.0px;" width="32" height="32" viewBox="0 0 32 32"><g transform="translate(16.0,16.0)"><circle r="11" fill="none" stroke="#a8a8a0" stroke-width="1"/><ellipse rx="11" ry="5" fill="none" stroke="#a8a8a0" stroke-width="1"/><ellipse rx="5" ry="11" fill="#d8e8f0" stroke="#a8a8a0" stroke-width="1" opacity="0.8"/><circle cx="0" cy="-11" r="2" fill="#c2e2b0" stroke="#a8a8a0" stroke-width="0.8"/><circle cx="0" cy="11" r="2" fill="#c2e2b0" stroke="#a8a8a0" stroke-width="0.8"/><circle cx="-11" cy="0" r="2" fill="#c2e2b0" stroke="#a8a8a0" stroke-width="0.8"/><circle cx="11" cy="0" r="2" fill="#c2e2b0" stroke="#a8a8a0" stroke-width="0.8"/><circle cx="-5" cy="-5" r="2" fill="#c2e2b0" stroke="#a8a8a0" stroke-width="0.8"/><circle cx="5" cy="5" r="2" fill="#c2e2b0" stroke="#a8a8a0" stroke-width="0.8"/></g></svg>
<svg class="s" style="left:337.5px;top:115.0px;" width="32" height="32" viewBox="0 0 32 32"><g transform="translate(16.0,16.0)"><path d="M-6 -5C-4 -9 0 -9 11 -9M-9 -2C-6 -12 2 -12 11 -12M-6 5C-4 9 0 9 11 9M-9 2C-6 12 2 12 11 12M4 -5C6 -4 8 -4 11 -4M4 5C6 4 8 4 11 4" stroke="#a0a090" stroke-width="1.2" fill="none"/><circle cx="-2" cy="0" r="4" fill="#c2e2b0" stroke="#a8b8a0" stroke-width="0.8"/></g></svg>
<svg class="s" style="left:383.0px;top:115.0px;" width="32" height="32" viewBox="0 0 32 32"><g transform="translate(16.0,16.0)"><path d="M-11 3C-5 2 2 -2 6 -10L12 -6C8 6 2 8 -11 10Z" fill="#c2e2b0"/></g></svg>
<svg class="s" style="left:429.0px;top:115.0px;" width="32" height="32" viewBox="0 0 32 32"><g transform="translate(16.0,16.0)"><circle r="11" fill="none" stroke="#a8a8a0" stroke-width="1"/><circle cx="-4" cy="-5" r="3" fill="#e0eef8" stroke="#a8a8a0" stroke-width="0.8"/><circle cx="-4" cy="6" r="2.4" fill="#e0eef8" stroke="#a8a8a0" stroke-width="0.8"/><circle cx="4" cy="1" r="4.5" fill="#9fd88a" stroke="#d0ecc0" stroke-width="1"/></g></svg>
<svg class="s" style="left:474.5px;top:115.0px;" width="32" height="32" viewBox="0 0 32 32"><g transform="translate(16.0,16.0)"><circle cx="2" cy="2" r="10" fill="none" stroke="#a8a8a0" stroke-width="1"/><circle cx="-9" cy="-9" r="2.8" fill="none" stroke="#a8a8a0" stroke-width="0.9"/><circle cx="-2" cy="7" r="2" fill="#e0eef8" stroke="#a8a8a0" stroke-width="0.8"/><circle cx="5" cy="2" r="4" fill="#9fd88a" stroke="#d0ecc0" stroke-width="1"/></g></svg>
<svg class="s" style="left:530.0px;top:115.0px;" width="32" height="32" viewBox="0 0 32 32"><g transform="translate(16.0,16.0)"><path d="M-11 -11H7V1H1V7H-11Z" fill="#dde8f2" stroke="#8898a8" stroke-width="1"/><rect x="2" y="3" width="8" height="8" fill="#9fd88a" stroke="#80a870" stroke-width="0.8" stroke-dasharray="1.5 1"/></g></svg>
<svg class="s" style="left:575.0px;top:115.0px;" width="32" height="32" viewBox="0 0 32 32"><g transform="translate(16.0,16.0)"><circle cx="-6" cy="-7" r="4" fill="#fff" stroke="#8898a8" stroke-width="0.9"/><path d="M-6 -9V-7L-4 -6" stroke="#8898a8" stroke-width="0.8" fill="none"/><circle cx="5" cy="-7" r="4" fill="#f5d898" stroke="#a8a080" stroke-width="0.9"/><rect x="3" y="-9" width="4" height="4" fill="none" stroke="#a8a080" stroke-width="0.7"/><path d="M-10 7L-8 3L-6 8L-4 2L-2 8L0 3L2 8L4 2L6 8L8 4L10 7" stroke="#7a98c0" stroke-width="0.9" fill="none"/><path d="M-11 -1V10H11" stroke="#8898a8" stroke-width="0.9" fill="none"/></g></svg>
<svg class="s" style="left:622.0px;top:115.0px;" width="32" height="32" viewBox="0 0 32 32"><g transform="translate(16.0,16.0)"><path d="M-10 -6L4 -10L10 8L-6 10Z" fill="#c2e2b0" stroke="#b8d0b0" stroke-width="0.8"/><path d="M-9 9L10 -3" stroke="#6a88b8" stroke-width="1.2"/><path d="M-8 5L-6 2L-4 5L-2 0L0 4L2 -1L4 3L6 -2L8 1" stroke="#7a98c0" stroke-width="0.8" fill="none"/></g></svg>
<svg class="s" style="left:668.5px;top:115.0px;" width="32" height="32" viewBox="0 0 32 32"><g transform="translate(16.0,16.0)"><circle cx="-6" cy="-7" r="4" fill="#fff" stroke="#8898a8" stroke-width="0.9"/><path d="M-6 -9V-7L-4 -6" stroke="#8898a8" stroke-width="0.8" fill="none"/><rect x="1" y="-11" width="9" height="8" fill="none" stroke="#8898a8" stroke-width="0.8" stroke-dasharray="1.2 1"/><path d="M3 -4L5.5 -9L8 -4Z" fill="#9fd88a"/><path d="M-10 7L-8 3L-6 8L-4 2L-2 8L0 3L2 8L4 2L6 8L8 4L10 7" stroke="#7a98c0" stroke-width="0.9" fill="none"/><path d="M-11 -1V10H11" stroke="#8898a8" stroke-width="0.9" fill="none"/></g></svg>
<svg class="s" style="left:714.0px;top:115.0px;" width="32" height="32" viewBox="0 0 32 32"><g transform="translate(16.0,16.0)"><path d="M0 -12L10 -7V7L0 12L-10 7V-7Z" fill="#e8eef2" stroke="#c8d0d8" stroke-width="1"/><path d="M0 -8V8M-7 -4L7 4M-7 4L7 -4" stroke="#a8b0b8" stroke-width="1"/></g></svg>
<svg class="s" style="left:769.0px;top:115.0px;" width="32" height="32" viewBox="0 0 32 32"><g transform="translate(16.0,16.0)"><g transform="rotate(-45)"><rect x="-15" y="-5" width="30" height="10" fill="#f5c518" stroke="#333" stroke-width="1.2"/><path d="M-12 -5V1" stroke="#333" stroke-width="0.9"/><path d="M-9 -5V-1" stroke="#333" stroke-width="0.9"/><path d="M-6 -5V1" stroke="#333" stroke-width="0.9"/><path d="M-3 -5V-1" stroke="#333" stroke-width="0.9"/><path d="M0 -5V1" stroke="#333" stroke-width="0.9"/><path d="M3 -5V-1" stroke="#333" stroke-width="0.9"/><path d="M6 -5V1" stroke="#333" stroke-width="0.9"/><path d="M9 -5V-1" stroke="#333" stroke-width="0.9"/><path d="M12 -5V1" stroke="#333" stroke-width="0.9"/></g></g></svg>
<div class="r" style="left:0px;top:154px;width:353px;height:723px;background:#ececec;"></div>
<div class="r" style="left:352px;top:154px;width:2px;height:723px;background:#a2a2a2;"></div>
<div class="r" style="left:354px;top:154px;width:1px;height:723px;background:#e4e4e4;"></div>
<div class="r" style="left:0px;top:153px;width:353px;height:23px;background:linear-gradient(#f0f0f0,#e3e3e3 50%,#cfcfcf);border-top:1px solid #fdfdfd;border-bottom:1px solid #9c9c9c;"></div>
<svg class="s" style="left:0px;top:157px;" width="14" height="14" viewBox="0 0 14 14"><circle cx="7" cy="7" r="6.8" fill="#4a4a4a"/><path d="M4.3 4.3L9.7 9.7M9.7 4.3L4.3 9.7" stroke="#fff" stroke-width="2" stroke-linecap="round"/></svg>
<svg class="s" style="left:18px;top:157px;" width="14" height="14" viewBox="0 0 14 14"><circle cx="7" cy="7" r="6.8" fill="#4a4a4a"/><rect x="3.6" y="6" width="5" height="4" fill="none" stroke="#fff" stroke-width="1.2"/><path d="M5.6 4.3H10.4V8" fill="none" stroke="#fff" stroke-width="1.2"/></svg>
<div class="t" style="left:-7.3px;width:400px;text-align:center;top:159.5px;font-size:11px;line-height:11px;font-weight:normal;color:#111;letter-spacing:-0.157px">Pipeline Browser</div>
<div class="r" style="left:0px;top:176px;width:352px;height:141px;background:#fff;"></div>
<div class="r" style="left:0px;top:317px;width:353px;height:1px;background:#9c9c9c;"></div>
<svg class="s" style="left:4px;top:170px;" width="16" height="11" viewBox="0 0 16 11"><ellipse cx="8" cy="5.5" rx="7.3" ry="4.6" fill="#fff" stroke="#8a8a8a" stroke-width="0.8"/><circle cx="8.3" cy="5.5" r="3.4" fill="#1c7fd6"/><circle cx="8.6" cy="5.4" r="1.9" fill="#000"/><circle cx="7.6" cy="4.4" r="0.7" fill="#fff"/></svg>
<svg class="s" style="left:42px;top:164.0px;" width="17" height="19" viewBox="0 0 17 19"><path d="M0.5 5.3L8.6 3.4L15.5 7.8L6.8 8.1Z" fill="#a6d67e" stroke="#6e7258" stroke-width="0.9" stroke-linejoin="round"/><path d="M0.5 5.3L6.8 8.1L6.8 17.5L0.5 14.4Z" fill="#6ca84e" stroke="#6e7258" stroke-width="0.9" stroke-linejoin="round"/><path d="M6.8 8.1L15.5 7.8L15.5 16.6L6.8 17.5Z" fill="#86d05e" stroke="#6e7258" stroke-width="0.9" stroke-linejoin="round"/></svg>
<div class="t" style="left:63.0px;top:168.5px;font-size:13px;line-height:13px;font-weight:normal;color:#000;letter-spacing:0.581px;">ant_3_1</div>
<svg class="s" style="left:4px;top:192px;" width="16" height="11" viewBox="0 0 16 11"><ellipse cx="8" cy="5.5" rx="7.3" ry="4.6" fill="#fff" stroke="#8a8a8a" stroke-width="0.8"/><circle cx="8.3" cy="5.5" r="3.4" fill="#1c7fd6"/><circle cx="8.6" cy="5.4" r="1.9" fill="#000"/><circle cx="7.6" cy="4.4" r="0.7" fill="#fff"/></svg>
<svg class="s" style="left:42px;top:186.0px;" width="17" height="19" viewBox="0 0 17 19"><path d="M0.5 5.3L8.6 3.4L15.5 7.8L6.8 8.1Z" fill="#a6d67e" stroke="#6e7258" stroke-width="0.9" stroke-linejoin="round"/><path d="M0.5 5.3L6.8 8.1L6.8 17.5L0.5 14.4Z" fill="#6ca84e" stroke="#6e7258" stroke-width="0.9" stroke-linejoin="round"/><path d="M6.8 8.1L15.5 7.8L15.5 16.6L6.8 17.5Z" fill="#86d05e" stroke="#6e7258" stroke-width="0.9" stroke-linejoin="round"/></svg>
<div class="t" style="left:63.0px;top:190.5px;font-size:13px;line-height:13px;font-weight:normal;color:#000;letter-spacing:-0.259px;">post_3_1</div>
<svg class="s" style="left:4px;top:214px;" width="16" height="11" viewBox="0 0 16 11"><ellipse cx="8" cy="5.5" rx="7.3" ry="4.6" fill="#fff" stroke="#8a8a8a" stroke-width="0.8"/><circle cx="8.3" cy="5.5" r="3.4" fill="#1c7fd6"/><circle cx="8.6" cy="5.4" r="1.9" fill="#000"/><circle cx="7.6" cy="4.4" r="0.7" fill="#fff"/></svg>
<svg class="s" style="left:42px;top:208.0px;" width="17" height="19" viewBox="0 0 17 19"><path d="M0.5 5.3L8.6 3.4L15.5 7.8L6.8 8.1Z" fill="#a6d67e" stroke="#6e7258" stroke-width="0.9" stroke-linejoin="round"/><path d="M0.5 5.3L6.8 8.1L6.8 17.5L0.5 14.4Z" fill="#6ca84e" stroke="#6e7258" stroke-width="0.9" stroke-linejoin="round"/><path d="M6.8 8.1L15.5 7.8L15.5 16.6L6.8 17.5Z" fill="#86d05e" stroke="#6e7258" stroke-width="0.9" stroke-linejoin="round"/></svg>
<div class="t" style="left:63.0px;top:212.5px;font-size:13px;line-height:13px;font-weight:normal;color:#000;letter-spacing:-0.779px;">inf_1_1</div>
<svg class="s" style="left:4px;top:236px;" width="16" height="11" viewBox="0 0 16 11"><ellipse cx="8" cy="5.5" rx="7.3" ry="4.6" fill="#fff" stroke="#8a8a8a" stroke-width="0.8"/><circle cx="8.3" cy="5.5" r="3.4" fill="#1c7fd6"/><circle cx="8.6" cy="5.4" r="1.9" fill="#000"/><circle cx="7.6" cy="4.4" r="0.7" fill="#fff"/></svg>
<svg class="s" style="left:42px;top:230.0px;" width="17" height="19" viewBox="0 0 17 19"><path d="M0.5 5.3L8.6 3.4L15.5 7.8L6.8 8.1Z" fill="#a6d67e" stroke="#6e7258" stroke-width="0.9" stroke-linejoin="round"/><path d="M0.5 5.3L6.8 8.1L6.8 17.5L0.5 14.4Z" fill="#6ca84e" stroke="#6e7258" stroke-width="0.9" stroke-linejoin="round"/><path d="M6.8 8.1L15.5 7.8L15.5 16.6L6.8 17.5Z" fill="#86d05e" stroke="#6e7258" stroke-width="0.9" stroke-linejoin="round"/></svg>
<div class="t" style="left:63.0px;top:234.5px;font-size:13px;line-height:13px;font-weight:normal;color:#000;letter-spacing:-0.382px;">VCl_2_3</div>
<svg class="s" style="left:4px;top:258px;" width="16" height="11" viewBox="0 0 16 11"><ellipse cx="8" cy="5.5" rx="7.3" ry="4.6" fill="#fff" stroke="#8a8a8a" stroke-width="0.8"/><circle cx="8.3" cy="5.5" r="3.4" fill="#1c7fd6"/><circle cx="8.6" cy="5.4" r="1.9" fill="#000"/><circle cx="7.6" cy="4.4" r="0.7" fill="#fff"/></svg>
<svg class="s" style="left:42px;top:252.0px;" width="17" height="19" viewBox="0 0 17 19"><path d="M0.5 5.3L8.6 3.4L15.5 7.8L6.8 8.1Z" fill="#a6d67e" stroke="#6e7258" stroke-width="0.9" stroke-linejoin="round"/><path d="M0.5 5.3L6.8 8.1L6.8 17.5L0.5 14.4Z" fill="#6ca84e" stroke="#6e7258" stroke-width="0.9" stroke-linejoin="round"/><path d="M6.8 8.1L15.5 7.8L15.5 16.6L6.8 17.5Z" fill="#86d05e" stroke="#6e7258" stroke-width="0.9" stroke-linejoin="round"/></svg>
<div class="t" style="left:63.0px;top:256.5px;font-size:13px;line-height:13px;font-weight:normal;color:#000;letter-spacing:-0.715px;">VCl_2_1</div>
<svg class="s" style="left:4px;top:280px;" width="16" height="11" viewBox="0 0 16 11"><ellipse cx="8" cy="5.5" rx="7.3" ry="4.6" fill="#fff" stroke="#8a8a8a" stroke-width="0.8"/><circle cx="8.3" cy="5.5" r="3.4" fill="#1c7fd6"/><circle cx="8.6" cy="5.4" r="1.9" fill="#000"/><circle cx="7.6" cy="4.4" r="0.7" fill="#fff"/></svg>
<svg class="s" style="left:42px;top:274.0px;" width="17" height="19" viewBox="0 0 17 19"><path d="M0.5 5.3L8.6 3.4L15.5 7.8L6.8 8.1Z" fill="#a6d67e" stroke="#6e7258" stroke-width="0.9" stroke-linejoin="round"/><path d="M0.5 5.3L6.8 8.1L6.8 17.5L0.5 14.4Z" fill="#6ca84e" stroke="#6e7258" stroke-width="0.9" stroke-linejoin="round"/><path d="M6.8 8.1L15.5 7.8L15.5 16.6L6.8 17.5Z" fill="#86d05e" stroke="#6e7258" stroke-width="0.9" stroke-linejoin="round"/></svg>
<div class="t" style="left:63.0px;top:278.5px;font-size:13px;line-height:13px;font-weight:normal;color:#000;letter-spacing:-0.448px;">VCl_2_2</div>
<svg class="s" style="left:4px;top:302px;" width="16" height="11" viewBox="0 0 16 11"><ellipse cx="8" cy="5.5" rx="7.3" ry="4.6" fill="#fff" stroke="#8a8a8a" stroke-width="0.8"/><circle cx="8.3" cy="5.5" r="3.4" fill="#1c7fd6"/><circle cx="8.6" cy="5.4" r="1.9" fill="#000"/><circle cx="7.6" cy="4.4" r="0.7" fill="#fff"/></svg>
<svg class="s" style="left:42px;top:296.0px;" width="17" height="19" viewBox="0 0 17 19"><path d="M0.5 5.3L8.6 3.4L15.5 7.8L6.8 8.1Z" fill="#a6d67e" stroke="#6e7258" stroke-width="0.9" stroke-linejoin="round"/><path d="M0.5 5.3L6.8 8.1L6.8 17.5L0.5 14.4Z" fill="#6ca84e" stroke="#6e7258" stroke-width="0.9" stroke-linejoin="round"/><path d="M6.8 8.1L15.5 7.8L15.5 16.6L6.8 17.5Z" fill="#86d05e" stroke="#6e7258" stroke-width="0.9" stroke-linejoin="round"/></svg>
<div class="t" style="left:63.0px;top:300.5px;font-size:13px;line-height:13px;font-weight:normal;color:#000;letter-spacing:-0.285px;">Clip1</div>
<div class="r" style="left:32px;top:176px;width:1px;height:131px;background:#8a8a8a;"></div>
<div class="r" style="left:32px;top:175px;width:9px;height:1px;background:#8a8a8a;"></div>
<div class="r" style="left:32px;top:197px;width:9px;height:1px;background:#8a8a8a;"></div>
<div class="r" style="left:32px;top:219px;width:9px;height:1px;background:#8a8a8a;"></div>
<div class="r" style="left:32px;top:241px;width:9px;height:1px;background:#8a8a8a;"></div>
<div class="r" style="left:32px;top:263px;width:9px;height:1px;background:#8a8a8a;"></div>
<div class="r" style="left:32px;top:285px;width:9px;height:1px;background:#8a8a8a;"></div>
<div class="r" style="left:32px;top:307px;width:9px;height:1px;background:#8a8a8a;"></div>
<div class="r" style="left:0px;top:176px;width:352px;height:0px;"></div>
<div class="r" style="left:0px;top:153px;width:353px;height:23px;background:linear-gradient(#f0f0f0,#e3e3e3 50%,#cfcfcf);border-top:1px solid #fdfdfd;border-bottom:1px solid #9c9c9c;"></div>
<svg class="s" style="left:0px;top:157px;" width="14" height="14" viewBox="0 0 14 14"><circle cx="7" cy="7" r="6.8" fill="#4a4a4a"/><path d="M4.3 4.3L9.7 9.7M9.7 4.3L4.3 9.7" stroke="#fff" stroke-width="2" stroke-linecap="round"/></svg>
<svg class="s" style="left:18px;top:157px;" width="14" height="14" viewBox="0 0 14 14"><circle cx="7" cy="7" r="6.8" fill="#4a4a4a"/><rect x="3.6" y="6" width="5" height="4" fill="none" stroke="#fff" stroke-width="1.2"/><path d="M5.6 4.3H10.4V8" fill="none" stroke="#fff" stroke-width="1.2"/></svg>
<div class="t" style="left:-7.3px;width:400px;text-align:center;top:159.5px;font-size:11px;line-height:11px;font-weight:normal;color:#111;letter-spacing:-0.157px">Pipeline Browser</div>
<div class="r" style="left:0px;top:317px;width:353px;height:23px;background:linear-gradient(#f0f0f0,#e3e3e3 50%,#cfcfcf);border-top:1px solid #fdfdfd;border-bottom:1px solid #9c9c9c;"></div>
<svg class="s" style="left:0px;top:321px;" width="14" height="14" viewBox="0 0 14 14"><circle cx="7" cy="7" r="6.8" fill="#4a4a4a"/><path d="M4.3 4.3L9.7 9.7M9.7 4.3L4.3 9.7" stroke="#fff" stroke-width="2" stroke-linecap="round"/></svg>
<svg class="s" style="left:18px;top:321px;" width="14" height="14" viewBox="0 0 14 14"><circle cx="7" cy="7" r="6.8" fill="#4a4a4a"/><rect x="3.6" y="6" width="5" height="4" fill="none" stroke="#fff" stroke-width="1.2"/><path d="M5.6 4.3H10.4V8" fill="none" stroke="#fff" stroke-width="1.2"/></svg>
<div class="t" style="left:-7.3px;width:400px;text-align:center;top:323.5px;font-size:11px;line-height:11px;font-weight:normal;color:#111;letter-spacing:-0.106px">Properties</div>
<div class="r" style="left:17px;top:357px;width:83px;height:19px;background:#f0f0f0;border:1px solid #d6d3c0;border-radius:4px;"></div>
<div class="r" style="left:104px;top:357px;width:83px;height:19px;background:#f0f0f0;border:1px solid #d6d3c0;border-radius:4px;"></div>
<div class="r" style="left:190px;top:357px;width:89px;height:19px;background:#fff;border:1px solid #c4bd9a;border-radius:4px;"></div>
<div class="r" style="left:282px;top:357px;width:52px;height:19px;background:#fff;border:1px solid #c4bd9a;border-radius:4px;"></div>
<svg class="s" style="left:30px;top:358px;" width="18" height="18" viewBox="0 0 18 18"><path d="M2 6L8 4L14 6V15L8 17L2 15Z" fill="#e4e4e0" stroke="#b0b0a8"/><path d="M8 9L15 2M11 2H15V6" stroke="#9fd49a" stroke-width="2" fill="none"/></svg>
<div class="t" style="left:52.3px;top:360.0px;font-size:13px;line-height:13px;font-weight:normal;color:#8c8c8c;letter-spacing:0.242px;">Apply</div>
<svg class="s" style="left:117px;top:358px;" width="18" height="18" viewBox="0 0 18 18"><circle cx="9" cy="9" r="6.5" fill="#f2b0a0" stroke="#eca090"/><path d="M5 13L13 5" stroke="#fff" stroke-width="2"/></svg>
<div class="t" style="left:139.2px;top:360.0px;font-size:13px;line-height:13px;font-weight:normal;color:#8c8c8c;letter-spacing:-0.142px;">Reset</div>
<svg class="s" style="left:203px;top:358px;" width="18" height="18" viewBox="0 0 18 18"><path d="M3.5 3.5L14.5 14.5M14.5 3.5L3.5 14.5" stroke="#e85533" stroke-width="3.6" stroke-linecap="round"/></svg>
<div class="t" style="left:226.7px;top:360.0px;font-size:13px;line-height:13px;font-weight:bold;color:#000;letter-spacing:-0.226px;-webkit-text-stroke:0.05px currentColor;">Delete</div>
<div class="t" style="left:302.0px;top:358.5px;font-size:16px;line-height:16px;font-weight:bold;color:#2a8ad8;letter-spacing:0px;-webkit-text-stroke:0.05px currentColor;">?</div>
<div class="r" style="left:10px;top:400px;width:303px;height:21px;background:#fff;border:1px solid #b9b9b9;"></div>
<div class="t" style="left:12.4px;top:404.5px;font-size:13px;line-height:13px;font-weight:normal;color:#8c8c8c;letter-spacing:0.213px;">Search ... (use Esc to clear text)</div>
<div class="r" style="left:315px;top:398px;width:26px;height:26px;background:linear-gradient(#f4f4dc,#e8e8c8);border:1px solid #c2bc8c;"></div>
<svg class="s" style="left:318px;top:401px;" width="20" height="20" viewBox="0 0 20 20"><g transform="translate(10,10)"><rect x="-1.8" y="-8" width="3.6" height="4" fill="#fff" stroke="#888" stroke-width="0.8" transform="rotate(0)"/><rect x="-1.8" y="-8" width="3.6" height="4" fill="#fff" stroke="#888" stroke-width="0.8" transform="rotate(45)"/><rect x="-1.8" y="-8" width="3.6" height="4" fill="#fff" stroke="#888" stroke-width="0.8" transform="rotate(90)"/><rect x="-1.8" y="-8" width="3.6" height="4" fill="#fff" stroke="#888" stroke-width="0.8" transform="rotate(135)"/><rect x="-1.8" y="-8" width="3.6" height="4" fill="#fff" stroke="#888" stroke-width="0.8" transform="rotate(180)"/><rect x="-1.8" y="-8" width="3.6" height="4" fill="#fff" stroke="#888" stroke-width="0.8" transform="rotate(225)"/><rect x="-1.8" y="-8" width="3.6" height="4" fill="#fff" stroke="#888" stroke-width="0.8" transform="rotate(270)"/><rect x="-1.8" y="-8" width="3.6" height="4" fill="#fff" stroke="#888" stroke-width="0.8" transform="rotate(315)"/><circle r="5.5" fill="#fff" stroke="#888" stroke-width="0.9"/><circle r="2.3" fill="#fff" stroke="#888" stroke-width="0.9"/></g></svg>
<div class="r" style="left:10px;top:436px;width:290px;height:1px;background:#a8a8a8;"></div>
<div class="r" style="left:299px;top:432px;width:1px;height:5px;background:#a8a8a8;"></div>
<div class="r" style="left:305px;top:434px;width:36px;height:2px;background:#fff;border-radius:2px;"></div>
<div class="t" style="left:10.4px;top:461.5px;font-size:13px;line-height:13px;font-weight:normal;color:#000;letter-spacing:0.291px;">Clip Type</div>
<div class="r" style="left:71px;top:458px;width:280px;height:21px;background:#fff;border:1px solid #cfcab0;border-radius:4px;"></div>
<div class="t" style="left:80.0px;top:461.5px;font-size:13px;line-height:13px;font-weight:normal;color:#000;letter-spacing:0.092px;">Sphere</div>
<div class="t" style="left:10.4px;top:492.0px;font-size:13px;line-height:13px;font-weight:bold;color:#000;letter-spacing:0.322px;-webkit-text-stroke:0.05px currentColor;">Sphere Parameters</div>
<div class="r" style="left:10px;top:506px;width:331px;height:1px;background:#c8c8c8;"></div>
<svg class="s" style="left:16px;top:516px;" width="14" height="14" viewBox="0 0 14 14"><rect x="0.5" y="0.5" width="13" height="13" rx="3" fill="#3c88f7" stroke="#2f6fd8" stroke-width="0.8"/><path d="M3.5 7.3L6 10.2L10.5 3.8" stroke="#fff" stroke-width="1.6" fill="none"/></svg>
<div class="t" style="left:34.1px;top:517.0px;font-size:13px;line-height:13px;font-weight:normal;color:#000;letter-spacing:0.142px;">Show Sphere</div>
<div class="t" style="left:16.3px;top:535.5px;font-size:13px;line-height:13px;font-weight:normal;color:#000;letter-spacing:0.194px;">Center</div>
<div class="r" style="left:59px;top:532px;width:135px;height:20px;background:#fff;border:1px solid #c4c4c4;"></div>
<div class="r" style="left:196px;top:532px;width:135px;height:20px;background:#fff;border:1px solid #c4c4c4;"></div>
<div class="r" style="left:333px;top:532px;width:20px;height:20px;background:#fff;border:1px solid #c4c4c4;"></div>
<div class="t" style="left:60.8px;top:536.0px;font-size:13px;line-height:13px;font-weight:normal;color:#000;letter-spacing:0.814px;">62.9284</div>
<div class="t" style="left:198.1px;top:536.0px;font-size:13px;line-height:13px;font-weight:normal;color:#000;letter-spacing:0.679px;">-5.92707</div>
<div class="t" style="left:335.0px;top:536.0px;font-size:13px;line-height:13px;font-weight:normal;color:#000;letter-spacing:0.3px;">-</div>
<div class="t" style="left:16.3px;top:558.0px;font-size:13px;line-height:13px;font-weight:normal;color:#000;letter-spacing:-0.097px;">Radius</div>
<div class="r" style="left:59px;top:555px;width:135px;height:20px;background:#fff;border:1px solid #c4c4c4;"></div>
<div class="t" style="left:60.8px;top:558.5px;font-size:13px;line-height:13px;font-weight:normal;color:#000;letter-spacing:-0.269px;">10</div>
<div class="t" style="left:16.3px;top:579.0px;font-size:13px;line-height:13px;font-weight:bold;color:#000;letter-spacing:0.233px;-webkit-text-stroke:0.05px currentColor;width:324.7px;overflow:hidden;">Note: Use 'P' to a 'Center' on mesh or 'Ctrl+P' to snap to the closest</div>
<div class="t" style="left:16.3px;top:595.0px;font-size:13px;line-height:13px;font-weight:bold;color:#000;letter-spacing:0.208px;-webkit-text-stroke:0.05px currentColor;">mesh point</div>
<div class="r" style="left:10px;top:620px;width:331px;height:1px;background:#c8c8c8;"></div>
<svg class="s" style="left:12px;top:631px;" width="14" height="14" viewBox="0 0 14 14"><rect x="0.5" y="0.5" width="13" height="13" rx="3" fill="#3c88f7" stroke="#2f6fd8" stroke-width="0.8"/><path d="M3.5 7.3L6 10.2L10.5 3.8" stroke="#fff" stroke-width="1.6" fill="none"/></svg>
<div class="t" style="left:30.2px;top:631.0px;font-size:13px;line-height:13px;font-weight:normal;color:#000;letter-spacing:0.317px;">Invert</div>
<svg class="s" style="left:12px;top:654px;" width="14" height="14" viewBox="0 0 14 14"><rect x="0.5" y="0.5" width="13" height="13" rx="3" fill="#fff" stroke="#c8c2a0" stroke-width="1"/></svg>
<div class="t" style="left:30.2px;top:655.0px;font-size:13px;line-height:13px;font-weight:normal;color:#000;letter-spacing:0.228px;">Crinkle clip</div>
<div class="r" style="left:10px;top:685px;width:290px;height:26px;background:#e6e6e6;border:1px solid #a9a9a9;"></div>
<div class="r" style="left:24px;top:695px;width:13px;height:6px;background:#5a6fd0;border:1px solid #2d3b8a;"></div>
<div class="t" style="left:49.3px;top:692.0px;font-size:13px;line-height:13px;font-weight:bold;color:#000;letter-spacing:0.327px;-webkit-text-stroke:0.05px currentColor;width:238px;overflow:hidden;">Display (UnstructuredGridRepresentation)</div>
<div class="r" style="left:305px;top:688px;width:45px;height:21px;background:#fff;border:1px solid #cfcab0;border-radius:4px;"></div>
<svg class="s" style="left:315px;top:690px;" width="16" height="16" viewBox="0 0 16 16"><path d="M3 3H9L11 5V13H3Z" fill="#f0f0f0" stroke="#666"/><path d="M6 1H12L14 3V11H11" fill="#f0f0f0" stroke="#666"/></svg>
<div class="t" style="left:10.0px;top:731.0px;font-size:13px;line-height:13px;font-weight:normal;color:#000;letter-spacing:0.246px;">Representation</div>
<div class="r" style="left:128px;top:731px;width:223px;height:21px;background:#fff;border:1px solid #cfcab0;border-radius:4px;"></div>
<div class="t" style="left:136.5px;top:735.0px;font-size:13px;line-height:13px;font-weight:normal;color:#000;letter-spacing:0.165px;">Surface</div>
<div class="t" style="left:10.0px;top:765.0px;font-size:13px;line-height:13px;font-weight:bold;color:#000;letter-spacing:0.125px;-webkit-text-stroke:0.05px currentColor;">Coloring</div>
<div class="r" style="left:10px;top:779px;width:331px;height:1px;background:#c8c8c8;"></div>
<div class="r" style="left:18px;top:788px;width:211px;height:21px;background:#fff;border:1px solid #cfcab0;border-radius:4px;"></div>
<div class="r" style="left:212px;top:788px;width:17px;height:21px;background:linear-gradient(#6ea1fb,#2f6ef0);border-radius:0 4px 4px 0;"></div>
<svg class="s" style="left:214px;top:790px;" width="13" height="17" viewBox="0 0 13 17"><path d="M3.5 6.5L6.5 3.5L9.5 6.5M3.5 10.5L6.5 13.5L9.5 10.5" stroke="#fff" stroke-width="1.3" fill="none"/></svg>
<svg class="s" style="left:32px;top:793px;" width="10" height="10" viewBox="0 0 10 10"><ellipse cx="5" cy="5" rx="3.3" ry="2.8" fill="#f6c27a" stroke="#222" stroke-width="1"/></svg>
<div class="t" style="left:47.1px;top:792.0px;font-size:13px;line-height:13px;font-weight:normal;color:#000;letter-spacing:0.431px;">cutout mask</div>
<div class="r" style="left:233px;top:788px;width:120px;height:21px;background:#f0f0f0;border:1px solid #dcdcdc;border-radius:4px;"></div>
<div class="r" style="left:16px;top:816px;width:73px;height:21px;background:#fff;border:1px solid #cfcab0;border-radius:4px;"></div>
<div class="r" style="left:94px;top:816px;width:49px;height:21px;background:#fff;border:1px solid #cfcab0;border-radius:4px;"></div>
<div class="r" style="left:148px;top:816px;width:49px;height:21px;background:#fff;border:1px solid #cfcab0;border-radius:4px;"></div>
<div class="r" style="left:202px;top:816px;width:49px;height:21px;background:#fff;border:1px solid #cfcab0;border-radius:4px;"></div>
<div class="r" style="left:256px;top:816px;width:49px;height:21px;background:#fff;border:1px solid #cfcab0;border-radius:4px;"></div>
<div class="r" style="left:310px;top:816px;width:50px;height:21px;background:#fff;border:1px solid #cfcab0;border-radius:4px;"></div>
<div class="t" style="left:52.1px;top:821.0px;font-size:13px;line-height:13px;font-weight:normal;color:#000;letter-spacing:0.198px;">Edit</div>
<div class="r" style="left:341px;top:640px;width:12px;height:237px;background:#ececec;"></div>
<div class="r" style="left:341px;top:420px;width:12px;height:220px;background:#ececec;"></div>
<div class="t" style="left:10.0px;top:854.0px;font-size:13px;line-height:13px;font-weight:bold;color:#000;letter-spacing:0.295px;-webkit-text-stroke:0.05px currentColor;">Styling</div>
<div class="r" style="left:10px;top:868px;width:331px;height:1px;background:#c8c8c8;"></div>
<svg class="s" style="left:26px;top:814.5px;" width="24" height="24" viewBox="0 0 24 24"><g transform="translate(12,12) scale(0.75)"><rect x="-8" y="0" width="20" height="9" fill="url(#rbh)" stroke="#6e6c55" stroke-width="0.8"/><circle cx="-4" cy="-3.5" r="6" fill="#b8e4a0" stroke="#7a9a6a" stroke-width="0.8"/></g></svg>
<svg class="s" style="left:107px;top:814.5px;" width="24" height="24" viewBox="0 0 24 24"><g transform="translate(12,12) scale(0.7)"><rect x="-9.8" y="0.3" width="21" height="9.4" fill="url(#rbh)" stroke="#6e6c55" stroke-width="0.8"/><path d="M-0.8 -4.3L3.5 -9C6.5 -12 12 -8.5 9.2 -5L3.5 0.8" stroke="#000" stroke-width="2.7" fill="none" stroke-linecap="round"/><path d="M-3.6 -1.3L-7.8 3C-10.5 6.5 -6 10.5 -3 7.2L0.6 3.6" stroke="#000" stroke-width="2.7" fill="none" stroke-linecap="round"/></g></svg>
<svg class="s" style="left:160.5px;top:814.5px;" width="24" height="24" viewBox="0 0 24 24"><g transform="translate(12,12) scale(0.7)"><path d="M-11 -4L-5 -9V-6H5V-9L11 -4L5 1V-2H-5V1Z" fill="#9ee07a" stroke="#7ab860" stroke-width="0.8"/><path d="M-11 8H11M-11 4V11M-5 6V10M1 6V10M6 6V10M11 4V11" stroke="#6a6a5a" stroke-width="1.1" fill="none"/></g></svg>
<svg class="s" style="left:214.6px;top:814.5px;" width="24" height="24" viewBox="0 0 24 24"><g transform="translate(12,12) scale(0.7)"><path d="M-11 -4L-5 -9V-6H5V-9L11 -4L5 1V-2H-5V1Z" fill="#9ee07a" stroke="#7ab860" stroke-width="0.8"/><path d="M-11 8H11M-11 4V11M-5 6V10M1 6V10M6 6V10M11 4V11" stroke="#6a6a5a" stroke-width="1.1" fill="none"/><text x="0" y="11" font-family="Liberation Sans" font-size="17" font-weight="bold" font-style="italic" fill="#000">c</text></g></svg>
<svg class="s" style="left:269px;top:814.5px;" width="24" height="24" viewBox="0 0 24 24"><g transform="translate(12,12) scale(0.7)"><path d="M-11 -4L-5 -9V-6H5V-9L11 -4L5 1V-2H-5V1Z" fill="#9ee07a" stroke="#7ab860" stroke-width="0.8"/><path d="M-11 8H11M-11 4V11M-5 6V10M1 6V10M6 6V10M11 4V11" stroke="#6a6a5a" stroke-width="1.1" fill="none"/><text x="1" y="11" font-family="Liberation Sans" font-size="16" font-weight="bold" font-style="italic" fill="#222">t</text></g></svg>
<svg class="s" style="left:323px;top:814.5px;" width="24" height="24" viewBox="0 0 24 24"><g transform="translate(12,12) scale(0.75)"><path d="M-9 -6L-4 -8L-2 -5H8V8H-9Z" fill="#f3d080" stroke="#a89050" stroke-width="1"/><path d="M0 2C0 -2 6 -2 6 2C6 5 2 7 0 9C-2 7 -6 5 -6 2C-6 -2 0 -2 0 2Z" fill="#d81818" transform="translate(4,0)"/></g></svg>
<div class="r" style="left:341px;top:810px;width:12px;height:30px;background:#ececec;"></div>
<div class="r" style="left:352px;top:154px;width:2px;height:723px;background:#a2a2a2;"></div>
<div class="r" style="left:354px;top:154px;width:1px;height:723px;background:#e4e4e4;"></div>
<div class="r" style="left:355px;top:154px;width:625px;height:723px;background:#ececec;"></div>
<div class="r" style="left:355px;top:164px;width:622px;height:713px;background:#e6e6e6;border:1px solid #d4d4d4;border-bottom:none;border-radius:6px 6px 0 0;"></div>
<div class="r" style="left:357px;top:203px;width:619px;height:674px;background:#0000ff;"></div>
<div class="r" style="left:359px;top:205px;width:615px;height:672px;background:#fbfbfb;"></div>
<div class="r" style="left:360px;top:206px;width:613px;height:671px;background:#52576e;"></div>
<svg class="s" style="left:360px;top:206px;overflow:hidden;" width="613" height="671" viewBox="0 0 613 671"><defs>
<clipPath id="bc"><path d="M352.0 130.4C356.2 130.4 361.0 131.1 365.0 131.8C369.0 132.5 372.5 132.7 376.0 134.5C379.5 136.3 382.6 139.3 386.0 142.7C389.4 146.1 393.7 150.9 396.5 155.0C399.3 159.1 400.9 162.6 402.6 167.4C404.3 172.2 405.7 178.3 406.7 183.8C407.7 189.3 408.4 195.4 408.8 200.2C409.1 205.0 409.1 207.7 408.8 212.5C408.4 217.3 407.7 223.9 406.7 229.0C405.7 234.1 404.0 237.8 402.6 243.3C401.2 248.8 399.4 256.0 398.5 261.8C397.6 267.6 396.9 274.2 397.5 278.2C398.1 282.2 400.1 281.6 402.0 286.0C403.9 290.4 406.2 298.0 409.0 304.5C411.8 311.0 415.0 317.0 419.0 325.0C423.0 333.0 428.4 342.7 433.0 352.4C437.6 362.1 443.2 373.9 446.6 383.0C450.0 392.1 452.1 399.0 453.5 407.0C454.9 415.0 455.3 423.0 455.0 431.0C454.7 439.0 453.8 447.0 451.8 455.0C449.8 463.0 446.9 470.4 443.2 479.0C439.5 487.6 434.6 497.8 429.5 506.4C424.4 515.0 419.2 523.0 412.4 530.4C405.5 537.8 397.0 546.1 388.4 551.0C379.8 555.9 370.1 557.8 361.0 559.5C351.9 561.2 341.9 561.3 333.7 561.2C325.5 561.1 320.1 560.4 312.0 559.0C303.9 557.6 294.2 555.7 285.0 553.0C275.8 550.3 268.5 549.2 257.0 543.0C245.5 536.8 226.2 522.7 216.0 515.5C205.8 508.3 202.5 505.3 196.0 500.0C189.5 494.7 184.3 491.6 177.0 483.5C169.7 475.4 158.5 461.4 152.0 451.5C145.5 441.6 141.8 433.1 138.0 424.0C134.2 414.9 131.5 409.0 129.0 397.0C126.5 385.0 123.7 364.8 122.8 352.0C121.9 339.2 122.4 330.7 123.7 320.0C125.0 309.3 127.8 298.7 130.5 288.0C133.2 277.3 135.8 266.3 139.7 256.0C143.6 245.7 148.9 233.7 154.0 226.0C159.1 218.3 164.5 214.5 170.0 210.0C175.5 205.5 179.5 204.0 187.0 198.8C194.5 193.6 205.8 185.0 215.0 179.0C224.2 173.0 231.8 167.9 242.0 163.0C252.2 158.1 265.0 153.6 276.0 149.6C287.0 145.6 297.3 142.0 308.0 139.0C318.7 136.0 332.7 132.9 340.0 131.5C347.3 130.1 347.8 130.3 352.0 130.4Z"/></clipPath>
<linearGradient id="gu" gradientUnits="userSpaceOnUse" x1="0" y1="130" x2="0" y2="294">
<stop offset="0" stop-color="#2b3482"/><stop offset="0.3" stop-color="#252c70"/><stop offset="0.65" stop-color="#20275f"/><stop offset="0.9" stop-color="#232a66"/><stop offset="1" stop-color="#252d6e"/></linearGradient>
<linearGradient id="guh" gradientUnits="userSpaceOnUse" x1="120" y1="0" x2="410" y2="0">
<stop offset="0" stop-color="#000" stop-opacity="0.12"/><stop offset="0.6" stop-color="#000" stop-opacity="0"/><stop offset="1" stop-color="#fff" stop-opacity="0.03"/></linearGradient>
<linearGradient id="gl" gradientUnits="userSpaceOnUse" x1="0" y1="282" x2="0" y2="564">
<stop offset="0" stop-color="#29337e"/><stop offset="0.1" stop-color="#2b3588"/><stop offset="0.25" stop-color="#3040a0"/><stop offset="0.55" stop-color="#3242a2"/><stop offset="1" stop-color="#2a3790"/></linearGradient>
<radialGradient id="gedge" gradientUnits="userSpaceOnUse" cx="300" cy="394" r="200">
<stop offset="0.7" stop-color="#000" stop-opacity="0"/><stop offset="1" stop-color="#000" stop-opacity="0.18"/></radialGradient>
<linearGradient id="cw" x1="0" y1="0" x2="0" y2="1">
<stop offset="0" stop-color="#b40426"/><stop offset="0.25" stop-color="#f08a6b"/><stop offset="0.38" stop-color="#f5c0a5"/><stop offset="0.5" stop-color="#dddcdc"/><stop offset="0.62" stop-color="#bcd2f7"/><stop offset="0.75" stop-color="#9bbcff"/><stop offset="1" stop-color="#3b4cc0"/></linearGradient>
<linearGradient id="rb" x1="0" y1="0" x2="0" y2="1">
<stop offset="0" stop-color="#ff00ff"/><stop offset="0.057" stop-color="#8000ff"/><stop offset="0.137" stop-color="#0000ff"/><stop offset="0.309" stop-color="#0080ff"/><stop offset="0.461" stop-color="#00ffff"/><stop offset="0.565" stop-color="#00ff80"/><stop offset="0.663" stop-color="#00ff00"/><stop offset="0.798" stop-color="#ffff00"/><stop offset="0.883" stop-color="#ff8000"/><stop offset="0.957" stop-color="#ff0000"/><stop offset="1" stop-color="#ff0000"/></linearGradient>
</defs><path d="M407.9 545.8L419.8 539.1M419.8 539.1L431.5 532.5M431.5 532.5L443.1 526.0M443.1 526.0L454.5 519.6M454.5 519.6L465.7 513.3M465.7 513.3L472.6 501.6M472.6 501.6L479.5 490.1M479.5 490.1L486.3 478.8M486.3 478.8L493.0 467.6M493.0 467.6L499.5 456.5M499.5 456.5L506.0 445.6M506.0 445.6L507.3 431.7M507.3 431.7L508.5 418.0M508.5 418.0L509.7 404.4M509.7 404.4L510.8 390.9M510.8 390.9L512.0 377.6M512.0 377.6L513.2 364.4M513.2 364.4L509.1 350.7M509.1 350.7L505.0 337.1M505.0 337.1L500.9 323.6M500.9 323.6L496.9 310.2M496.9 310.2L492.9 296.8M492.9 296.8L488.9 283.5M488.9 283.5L480.4 272.1M480.4 272.1L472.0 260.6M472.0 260.6L463.5 249.2M310.3 552.9L321.9 553.3M321.9 553.3L333.3 553.7M333.3 553.7L344.5 554.1M344.5 554.1L355.5 554.5M355.5 554.5L365.8 548.1M365.8 548.1L375.9 541.7M375.9 541.7L385.8 535.5M385.8 535.5L395.5 529.5M395.5 529.5L405.0 523.5M405.0 523.5L414.4 517.6M414.4 517.6L421.4 506.5M421.4 506.5L428.3 495.5M428.3 495.5L435.0 484.7M435.0 484.7L441.7 474.0M441.7 474.0L448.3 463.5M448.3 463.5L454.8 453.1M454.8 453.1L457.8 439.6M457.8 439.6L460.8 426.2M460.8 426.2L463.8 412.9M463.8 412.9L466.8 399.7M466.8 399.7L469.7 386.5M469.7 386.5L472.6 373.5M472.6 373.5L471.7 359.7M471.7 359.7L470.7 345.8M470.7 345.8L469.8 332.0M469.8 332.0L468.8 318.1M468.8 318.1L467.8 304.2M467.8 304.2L466.9 290.3M466.9 290.3L462.2 278.0M462.2 278.0L457.4 265.6M457.4 265.6L452.6 253.0M452.6 253.0L447.8 240.4M258.4 543.8L266.9 543.2M266.9 543.2L275.2 542.6M275.2 542.6L283.3 542.1M283.3 542.1L291.1 541.6M291.1 541.6L298.8 541.0M298.8 541.0L306.4 540.5M306.4 540.5L314.8 533.9M314.8 533.9L323.0 527.4M323.0 527.4L331.1 521.0M331.1 521.0L339.1 514.8M339.1 514.8L346.8 508.6M346.8 508.6L354.5 502.6M354.5 502.6L361.5 492.1M361.5 492.1L368.5 481.6M368.5 481.6L375.4 471.3M375.4 471.3L382.2 461.1M382.2 461.1L388.9 451.1M388.9 451.1L395.6 441.1M395.6 441.1L400.6 428.5M400.6 428.5L405.5 416.0M405.5 416.0L410.5 403.5M410.5 403.5L415.4 391.1M415.4 391.1L420.3 378.7M420.3 378.7L425.2 366.3M425.2 366.3L427.7 353.4M427.7 353.4L430.2 340.4M430.2 340.4L432.7 327.3M432.7 327.3L435.2 314.2M435.2 314.2L437.7 301.0M437.7 301.0L440.2 287.7M440.2 287.7L439.9 275.9M439.9 275.9L439.5 264.1M439.5 264.1L439.2 252.0M439.2 252.0L438.8 239.8M226.8 524.0L227.9 527.7M227.9 527.7L232.7 525.2M232.7 525.2L237.3 522.8M237.3 522.8L241.8 520.4M241.8 520.4L246.2 518.1M246.2 518.1L250.5 515.9M250.5 515.9L254.6 513.7M254.6 513.7L261.4 506.4M261.4 506.4L267.9 499.3M267.9 499.3L274.4 492.2M274.4 492.2L280.7 485.4M280.7 485.4L286.8 478.7M286.8 478.7L292.9 472.1M292.9 472.1L300.2 461.9M300.2 461.9L307.4 451.9M307.4 451.9L314.6 441.9M314.6 441.9L321.6 432.2M321.6 432.2L328.6 422.5M328.6 422.5L335.5 412.9M335.5 412.9L342.4 401.6M342.4 401.6L349.4 390.2M349.4 390.2L356.3 378.9M356.3 378.9L363.2 367.6M363.2 367.6L370.1 356.3M370.1 356.3L376.9 345.1M376.9 345.1L382.8 333.9M382.8 333.9L388.7 322.5M388.7 322.5L394.6 311.1M394.6 311.1L400.6 299.6M400.6 299.6L406.6 288.0M406.6 288.0L412.7 276.3M412.7 276.3L416.8 266.5M416.8 266.5L420.9 256.5M420.9 256.5L425.1 246.4M425.1 246.4L429.3 236.0M202.1 505.6L198.6 505.9M198.6 505.9L199.9 500.9M199.9 500.9L201.1 495.9M201.1 495.9L202.3 491.2M202.3 491.2L203.5 486.5M203.5 486.5L204.7 482.0M204.7 482.0L205.8 477.5M205.8 477.5L211.1 469.1M211.1 469.1L216.2 460.9M216.2 460.9L221.2 452.9M221.2 452.9L226.1 445.0M226.1 445.0L231.0 437.3M231.0 437.3L235.7 429.7M235.7 429.7L243.4 419.8M243.4 419.8L251.0 410.1M251.0 410.1L258.5 400.4M258.5 400.4L265.8 390.9M265.8 390.9L273.2 381.5M273.2 381.5L280.4 372.2M280.4 372.2L289.2 362.2M289.2 362.2L298.0 352.3M298.0 352.3L306.8 342.4M306.8 342.4L315.6 332.5M315.6 332.5L324.3 322.6M324.3 322.6L333.1 312.8M333.1 312.8L342.0 303.8M342.0 303.8L351.0 294.8M351.0 294.8L360.1 285.7M360.1 285.7L369.3 276.5M369.3 276.5L378.5 267.3M378.5 267.3L387.8 258.0M387.8 258.0L395.8 251.1M395.8 251.1L404.0 244.1M404.0 244.1L412.3 237.0M174.0 481.2L172.4 473.1M172.4 473.1L170.8 465.3M170.8 465.3L169.3 457.6M169.3 457.6L167.8 450.1M167.8 450.1L166.3 442.8M166.3 442.8L164.8 435.6M164.8 435.6L168.9 425.8M168.9 425.8L172.9 416.2M172.9 416.2L176.9 406.8M176.9 406.8L180.7 397.5M180.7 397.5L184.5 388.5M184.5 388.5L188.2 379.6M188.2 379.6L196.3 369.8M196.3 369.8L204.4 360.2M204.4 360.2L212.3 350.7M212.3 350.7L220.1 341.3M220.1 341.3L227.9 332.0M227.9 332.0L235.5 322.9M235.5 322.9L246.1 314.4M246.1 314.4L256.6 306.0M256.6 306.0L267.1 297.7M267.1 297.7L277.6 289.3M277.6 289.3L288.0 281.0M288.0 281.0L298.3 272.8M298.3 272.8L309.9 266.5M309.9 266.5L321.5 260.3M321.5 260.3L333.2 254.0M333.2 254.0L345.0 247.7M345.0 247.7L356.8 241.4M356.8 241.4L368.7 235.0M150.3 434.3L146.7 423.5M146.7 423.5L143.3 412.9M143.3 412.9L139.9 402.5M139.9 402.5L136.6 392.3M136.6 392.3L139.9 380.8M139.9 380.8L143.2 369.5M143.2 369.5L146.4 358.3M146.4 358.3L149.5 347.4M149.5 347.4L152.6 336.7M520.7 451.1L527.5 439.4M527.5 439.4L534.2 427.9M534.2 427.9L540.8 416.6M540.8 416.6L540.7 403.0M540.7 403.0L540.6 389.7M540.6 389.7L540.5 376.6M540.5 376.6L540.4 363.7M540.4 363.7L540.3 350.9M540.3 350.9L540.2 338.4M540.2 338.4L533.8 326.2M533.8 326.2L527.4 314.2M527.4 314.2L521.1 302.3M521.1 302.3L514.9 290.6M514.9 290.6L508.8 279.0M508.8 279.0L502.7 267.6M502.7 267.6L491.8 258.6M263.0 545.1L258.4 543.8M258.4 543.8L253.3 541.1M253.3 541.1L248.2 538.4M248.2 538.4L243.1 535.7M243.1 535.7L238.0 533.0M238.0 533.0L232.9 530.3M232.9 530.3L227.9 527.7M227.9 527.7L223.0 524.0M223.0 524.0L218.1 520.4M218.1 520.4L213.2 516.8M213.2 516.8L208.3 513.2M208.3 513.2L203.5 509.5M203.5 509.5L198.6 505.9M198.6 505.9L194.5 501.8M194.5 501.8L190.4 497.7M190.4 497.7L186.4 493.6M186.4 493.6L182.3 489.5M182.3 489.5L178.2 485.3M178.2 485.3L174.0 481.2M174.0 481.2L171.3 477.1M388.8 552.9L381.9 553.2M381.9 553.2L375.2 553.6M375.2 553.6L368.5 553.9M368.5 553.9L362.0 554.2M362.0 554.2L355.5 554.5M355.5 554.5L347.1 552.1M347.1 552.1L338.7 549.7M338.7 549.7L330.5 547.4M330.5 547.4L322.4 545.1M322.4 545.1L314.3 542.8M314.3 542.8L306.4 540.5M306.4 540.5L297.6 536.0M297.6 536.0L288.9 531.5M288.9 531.5L280.3 527.0M280.3 527.0L271.7 522.6M271.7 522.6L263.1 518.1M263.1 518.1L254.6 513.7M254.6 513.7L246.5 507.7M246.5 507.7L238.4 501.7M238.4 501.7L230.2 495.6M230.2 495.6L222.1 489.6M222.1 489.6L213.9 483.6M213.9 483.6L205.8 477.5M205.8 477.5L199.1 470.7M199.1 470.7L192.3 463.7M192.3 463.7L185.5 456.8M185.5 456.8L178.7 449.8M178.7 449.8L171.8 442.7M171.8 442.7L164.8 435.6M164.8 435.6L160.3 428.6M160.3 428.6L155.6 421.5M155.6 421.5L150.9 414.3M150.9 414.3L146.2 407.1M146.2 407.1L141.4 399.7M141.4 399.7L136.6 392.3M136.6 392.3L134.8 385.9M465.7 513.3L456.7 514.1M456.7 514.1L448.0 514.8M448.0 514.8L439.4 515.5M439.4 515.5L430.9 516.2M430.9 516.2L422.6 516.9M422.6 516.9L414.4 517.6M414.4 517.6L404.1 515.0M404.1 515.0L393.9 512.5M393.9 512.5L383.9 510.0M383.9 510.0L373.9 507.5M373.9 507.5L364.1 505.0M364.1 505.0L354.5 502.6M354.5 502.6L344.0 497.5M344.0 497.5L333.6 492.3M333.6 492.3L323.3 487.2M323.3 487.2L313.1 482.1M313.1 482.1L303.0 477.1M303.0 477.1L292.9 472.1M292.9 472.1L283.4 465.0M283.4 465.0L273.8 457.9M273.8 457.9L264.3 450.9M264.3 450.9L254.7 443.8M254.7 443.8L245.2 436.8M245.2 436.8L235.7 429.7M235.7 429.7L227.9 421.5M227.9 421.5L220.1 413.2M220.1 413.2L212.2 404.9M212.2 404.9L204.2 396.5M204.2 396.5L196.2 388.1M196.2 388.1L188.2 379.6M188.2 379.6L182.9 371.0M182.9 371.0L177.6 362.2M177.6 362.2L172.2 353.4M172.2 353.4L166.8 344.4M166.8 344.4L161.3 335.4M161.3 335.4L155.7 326.2M487.8 496.3L482.1 500.7M482.1 500.7L476.5 505.0M476.5 505.0L471.0 509.2M471.0 509.2L465.7 513.3M506.0 445.6L497.1 446.9M497.1 446.9L488.4 448.2M488.4 448.2L479.8 449.5M479.8 449.5L471.3 450.7M471.3 450.7L463.0 451.9M463.0 451.9L454.8 453.1M454.8 453.1L444.6 451.1M444.6 451.1L434.6 449.0M434.6 449.0L424.6 447.0M424.6 447.0L414.8 445.0M414.8 445.0L405.1 443.1M405.1 443.1L395.6 441.1M395.6 441.1L385.4 436.4M385.4 436.4L375.3 431.6M375.3 431.6L365.2 426.9M365.2 426.9L355.2 422.2M355.2 422.2L345.3 417.6M345.3 417.6L335.5 412.9M335.5 412.9L326.3 406.1M326.3 406.1L317.1 399.4M317.1 399.4L307.9 392.6M307.9 392.6L298.7 385.8M298.7 385.8L289.5 379.0M289.5 379.0L280.4 372.2M280.4 372.2L273.0 364.1M273.0 364.1L265.6 356.0M265.6 356.0L258.1 347.8M258.1 347.8L250.6 339.5M250.6 339.5L243.1 331.2M243.1 331.2L235.5 322.9M235.5 322.9L230.7 314.2M230.7 314.2L225.9 305.5M225.9 305.5L221.1 296.7M221.1 296.7L216.1 287.7M216.1 287.7L211.1 278.6M545.5 392.4L543.9 400.6M543.9 400.6L542.4 408.7M542.4 408.7L540.8 416.6M540.8 416.6L534.7 421.6M534.7 421.6L528.8 426.6M528.8 426.6L522.9 431.5M522.9 431.5L517.2 436.3M517.2 436.3L511.6 441.0M511.6 441.0L506.0 445.6M513.2 364.4L506.2 366.0M506.2 366.0L499.3 367.5M499.3 367.5L492.5 369.0M492.5 369.0L485.8 370.5M485.8 370.5L479.2 372.0M479.2 372.0L472.6 373.5M472.6 373.5L464.5 372.3M464.5 372.3L456.5 371.1M456.5 371.1L448.6 369.9M448.6 369.9L440.7 368.7M440.7 368.7L432.9 367.5M432.9 367.5L425.2 366.3M425.2 366.3L417.1 362.8M417.1 362.8L409.0 359.2M409.0 359.2L400.9 355.6M400.9 355.6L392.9 352.1M392.9 352.1L384.9 348.6M384.9 348.6L376.9 345.1M376.9 345.1L369.6 339.7M369.6 339.7L362.3 334.3M362.3 334.3L355.0 328.9M355.0 328.9L347.7 323.5M347.7 323.5L340.4 318.1M340.4 318.1L333.1 312.8M333.1 312.8L327.4 306.2M327.4 306.2L321.6 299.6M321.6 299.6L315.8 292.9M315.8 292.9L310.0 286.2M310.0 286.2L304.2 279.5M304.2 279.5L298.3 272.8M298.3 272.8L294.9 265.7M294.9 265.7L291.4 258.5M291.4 258.5L287.8 251.3M546.2 304.4L544.9 311.4M544.9 311.4L543.7 318.3M543.7 318.3L542.5 325.1M542.5 325.1L541.4 331.8M541.4 331.8L540.2 338.4M540.2 338.4L535.5 342.9M535.5 342.9L530.9 347.3M530.9 347.3L526.4 351.7M526.4 351.7L521.9 356.0M521.9 356.0L517.5 360.2M517.5 360.2L513.2 364.4M488.9 283.5L485.1 284.7M485.1 284.7L481.4 285.8M481.4 285.8L477.8 286.9M477.8 286.9L474.1 288.1M474.1 288.1L470.5 289.2M470.5 289.2L466.9 290.3M466.9 290.3L462.4 289.9M462.4 289.9L457.9 289.4M457.9 289.4L453.4 289.0M453.4 289.0L449.0 288.5M449.0 288.5L444.6 288.1M444.6 288.1L440.2 287.7M440.2 287.7L435.6 285.8M435.6 285.8L431.0 283.9M431.0 283.9L426.4 282.0M426.4 282.0L421.8 280.1M421.8 280.1L417.3 278.2M417.3 278.2L412.7 276.3M412.7 276.3L408.5 273.3M408.5 273.3L404.4 270.2M404.4 270.2L400.2 267.2M400.2 267.2L396.1 264.1M396.1 264.1L391.9 261.1M391.9 261.1L387.8 258.0M387.8 258.0L384.6 254.2M384.6 254.2L381.4 250.4M381.4 250.4L378.3 246.5M378.3 246.5L375.1 242.7M375.1 242.7L371.9 238.8M371.9 238.8L368.7 235.0M503.7 260.0L503.2 263.8M503.2 263.8L502.7 267.6M502.7 267.6L500.4 270.3M500.4 270.3L498.0 273.0M498.0 273.0L495.7 275.6M495.7 275.6L493.4 278.3M493.4 278.3L491.1 280.9M491.1 280.9L488.9 283.5" stroke="#302f2c" stroke-width="1" fill="none"/><path d="M463.5 249.2L455.0 237.7" stroke="#32322f" stroke-width="1" fill="none"/><path d="M455.0 237.7L446.6 226.3M197.9 278.6L206.1 269.5M540.1 288.1L533.0 279.0M470.1 240.9L459.3 232.1" stroke="#3a3936" stroke-width="1" fill="none"/><path d="M446.6 226.3L438.1 214.8M429.3 222.3L438.1 214.8M265.4 235.9L277.0 229.3M494.0 239.3L482.4 234.3M542.0 280.9L544.7 289.2M504.1 240.0L505.6 244.4" stroke="#42413d" stroke-width="1" fill="none"/><path d="M447.8 240.4L443.0 227.7M181.4 297.3L189.7 287.9M547.9 308.4L547.4 297.4M211.1 278.6L206.1 269.5M504.7 252.3L504.2 256.1" stroke="#373633" stroke-width="1" fill="none"/><path d="M443.0 227.7L438.1 214.8M438.5 227.4L438.1 214.8M433.7 225.5L438.1 214.8M253.7 242.5L265.4 235.9M505.6 244.4L494.0 239.3M361.6 218.5L359.8 214.3" stroke="#41403c" stroke-width="1" fill="none"/><path d="M438.8 239.8L438.5 227.4M480.9 249.7L470.1 240.9" stroke="#363532" stroke-width="1" fill="none"/><path d="M429.3 236.0L433.7 225.5M133.0 379.4L131.2 372.9M284.3 244.1L280.7 236.7" stroke="#383734" stroke-width="1" fill="none"/><path d="M412.3 237.0L420.7 229.7M164.4 316.4L172.9 306.8M548.9 331.1L548.4 319.6" stroke="#343330" stroke-width="1" fill="none"/><path d="M420.7 229.7L429.3 222.3M544.7 289.2L547.4 297.4" stroke="#3b3a37" stroke-width="1" fill="none"/><path d="M368.7 235.0L379.8 231.7" stroke="#31302e" stroke-width="1" fill="none"/><path d="M379.8 231.7L391.2 228.4M547.4 297.4L546.2 304.4M366.9 230.9L365.1 226.8" stroke="#353431" stroke-width="1" fill="none"/><path d="M391.2 228.4L402.6 225.1M189.7 287.9L197.9 278.6M365.1 226.8L363.3 222.7" stroke="#393835" stroke-width="1" fill="none"/><path d="M402.6 225.1L414.3 221.7M363.3 222.7L361.6 218.5" stroke="#3d3c38" stroke-width="1" fill="none"/><path d="M414.3 221.7L426.1 218.3" stroke="#403f3c" stroke-width="1" fill="none"/><path d="M426.1 218.3L438.1 214.8M290.5 226.1L303.9 222.9M471.1 229.3L459.9 224.4" stroke="#44433f" stroke-width="1" fill="none"/><path d="M152.6 336.7L155.7 326.2" stroke="#30302d" stroke-width="1" fill="none"/><path d="M155.7 326.2L164.4 316.4" stroke="#32312e" stroke-width="1" fill="none"/><path d="M172.9 306.8L181.4 297.3M548.4 319.6L547.9 308.4M155.7 326.2L153.8 318.1" stroke="#363531" stroke-width="1" fill="none"/><path d="M206.1 269.5L218.1 262.7M533.0 279.0L525.9 270.1" stroke="#3c3b37" stroke-width="1" fill="none"/><path d="M218.1 262.7L230.0 255.9M525.9 270.1L519.0 261.4" stroke="#3d3c39" stroke-width="1" fill="none"/><path d="M230.0 255.9L241.9 249.2M519.0 261.4L512.3 252.8M459.3 232.1L448.7 223.4M131.2 372.9L129.4 366.2M280.7 236.7L277.0 229.3M505.6 244.4L505.2 248.4" stroke="#3f3e3a" stroke-width="1" fill="none"/><path d="M241.9 249.2L253.7 242.5M512.3 252.8L505.6 244.4" stroke="#403f3b" stroke-width="1" fill="none"/><path d="M277.0 229.3L290.5 226.1M482.4 234.3L471.1 229.3M448.7 223.4L438.1 214.8" stroke="#43423e" stroke-width="1" fill="none"/><path d="M303.9 222.9L317.4 219.7M317.4 219.7L330.9 216.5M459.9 224.4L448.9 219.6M448.9 219.6L438.1 214.8" stroke="#454440" stroke-width="1" fill="none"/><path d="M330.9 216.5L344.4 213.4M344.4 213.4L357.9 210.2M410.9 213.2L424.4 214.0M424.4 214.0L438.1 214.8M277.0 229.3L276.4 222.5M502.6 235.5L504.1 240.0" stroke="#464541" stroke-width="1" fill="none"/><path d="M357.9 210.2L371.0 210.9M371.0 210.9L384.2 211.7M384.2 211.7L397.5 212.5M397.5 212.5L410.9 213.2" stroke="#474541" stroke-width="1" fill="none"/><path d="M125.6 352.6L128.7 339.2" stroke="#52504b" stroke-width="1" fill="none"/><path d="M128.7 339.2L131.8 326.0" stroke="#55544f" stroke-width="1" fill="none"/><path d="M131.8 326.0L134.9 313.1M493.0 213.1L496.4 217.5" stroke="#595852" stroke-width="1" fill="none"/><path d="M134.9 313.1L137.9 300.3M462.7 199.5L456.3 203.5M513.0 231.7L507.4 226.8M489.6 208.8L493.0 213.1" stroke="#5d5b56" stroke-width="1" fill="none"/><path d="M137.9 300.3L140.8 287.7M524.8 241.7L518.8 236.6M145.8 284.2L143.7 275.3M486.2 204.4L489.6 208.8" stroke="#605e59" stroke-width="1" fill="none"/><path d="M140.8 287.7L143.7 275.3" stroke="#63615b" stroke-width="1" fill="none"/><path d="M143.7 275.3L152.9 265.4" stroke="#65635e" stroke-width="1" fill="none"/><path d="M152.9 265.4L162.0 255.6" stroke="#676660" stroke-width="1" fill="none"/><path d="M162.0 255.6L171.0 245.9" stroke="#696862" stroke-width="1" fill="none"/><path d="M171.0 245.9L179.9 236.4M273.0 187.5L287.2 187.4M364.5 174.8L366.3 171.7" stroke="#6b6963" stroke-width="1" fill="none"/><path d="M179.9 236.4L188.6 227.0" stroke="#6c6b64" stroke-width="1" fill="none"/><path d="M188.6 227.0L197.2 217.8" stroke="#6d6c65" stroke-width="1" fill="none"/><path d="M197.2 217.8L210.1 212.6M223.0 207.5L235.7 202.4M235.7 202.4L248.2 197.4M478.4 192.0L476.0 191.3M366.3 171.7L368.1 168.6" stroke="#6e6c66" stroke-width="1" fill="none"/><path d="M210.1 212.6L223.0 207.5M273.0 187.5L275.5 182.0" stroke="#6e6d66" stroke-width="1" fill="none"/><path d="M248.2 197.4L260.7 192.4M471.3 187.8L476.0 191.3" stroke="#6d6b65" stroke-width="1" fill="none"/><path d="M260.7 192.4L273.0 187.5" stroke="#6c6a64" stroke-width="1" fill="none"/><path d="M287.2 187.4L301.4 187.3M424.3 178.4L427.8 187.8M476.0 191.3L469.3 195.4" stroke="#696761" stroke-width="1" fill="none"/><path d="M301.4 187.3L315.6 187.2M479.4 195.7L482.8 200.1" stroke="#67655f" stroke-width="1" fill="none"/><path d="M315.6 187.2L329.6 187.1" stroke="#64635d" stroke-width="1" fill="none"/><path d="M329.6 187.1L343.6 187.0M200.2 235.6L198.7 226.7M274.4 201.8L273.7 194.7M359.3 183.9L361.0 180.9" stroke="#62605a" stroke-width="1" fill="none"/><path d="M343.6 187.0L357.5 186.8M357.5 186.8L359.3 183.9" stroke="#5f5d57" stroke-width="1" fill="none"/><path d="M357.5 186.8L370.9 191.5M357.6 190.8L357.5 186.8" stroke="#5b5a54" stroke-width="1" fill="none"/><path d="M370.9 191.5L384.3 196.1M147.8 292.9L145.8 284.2" stroke="#585651" stroke-width="1" fill="none"/><path d="M384.3 196.1L397.7 200.8M275.7 215.7L275.0 208.8" stroke="#54534e" stroke-width="1" fill="none"/><path d="M397.7 200.8L411.2 205.5M357.8 202.5L357.7 198.6" stroke="#504f4a" stroke-width="1" fill="none"/><path d="M411.2 205.5L424.6 210.1M357.9 206.3L357.8 202.5" stroke="#4c4b46" stroke-width="1" fill="none"/><path d="M424.6 210.1L438.1 214.8" stroke="#484742" stroke-width="1" fill="none"/><path d="M176.5 214.1L185.9 204.1" stroke="#949289" stroke-width="1" fill="none"/><path d="M185.9 204.1L195.2 194.3" stroke="#96948b" stroke-width="1" fill="none"/><path d="M195.2 194.3L204.3 184.7M300.5 147.0L306.4 143.7" stroke="#97958c" stroke-width="1" fill="none"/><path d="M204.3 184.7L213.3 175.2M213.3 175.2L226.4 171.4" stroke="#98958c" stroke-width="1" fill="none"/><path d="M226.4 171.4L239.2 167.7" stroke="#97948c" stroke-width="1" fill="none"/><path d="M239.2 167.7L251.9 164.1" stroke="#96938a" stroke-width="1" fill="none"/><path d="M251.9 164.1L264.4 160.4" stroke="#949189" stroke-width="1" fill="none"/><path d="M264.4 160.4L276.7 156.9" stroke="#928f87" stroke-width="1" fill="none"/><path d="M276.7 156.9L288.9 153.4M207.7 189.9L210.5 182.6" stroke="#8f8c84" stroke-width="1" fill="none"/><path d="M288.9 153.4L302.5 156.0M404.2 151.0L410.6 155.1M442.4 163.4L444.2 165.9" stroke="#8b8981" stroke-width="1" fill="none"/><path d="M302.5 156.0L315.9 158.6M368.3 150.6L378.7 154.6" stroke="#87857d" stroke-width="1" fill="none"/><path d="M315.9 158.6L329.2 161.1M410.6 155.1L416.9 159.1" stroke="#838179" stroke-width="1" fill="none"/><path d="M329.2 161.1L342.3 163.6M150.3 255.5L152.5 248.6M402.8 158.8L407.4 158.9M422.0 161.0L427.1 162.9" stroke="#7e7c74" stroke-width="1" fill="none"/><path d="M342.3 163.6L355.3 166.1M388.8 158.6L397.3 168.3M483.5 193.6L480.9 192.8M447.8 170.6L452.5 174.0" stroke="#78766f" stroke-width="1" fill="none"/><path d="M355.3 166.1L368.1 168.6M371.5 166.9L374.9 165.3" stroke="#73716a" stroke-width="1" fill="none"/><path d="M368.1 168.6L380.0 176.4" stroke="#6d6b64" stroke-width="1" fill="none"/><path d="M380.0 176.4L391.8 184.2" stroke="#66645e" stroke-width="1" fill="none"/><path d="M391.8 184.2L403.5 191.9" stroke="#5f5e58" stroke-width="1" fill="none"/><path d="M403.5 191.9L415.1 199.6" stroke="#585752" stroke-width="1" fill="none"/><path d="M415.1 199.6L426.6 207.2M203.2 252.8L201.7 244.3" stroke="#514f4b" stroke-width="1" fill="none"/><path d="M426.6 207.2L438.1 214.8" stroke="#494844" stroke-width="1" fill="none"/><path d="M291.6 141.8L302.9 139.0" stroke="#aca99f" stroke-width="1" fill="none"/><path d="M302.9 139.0L313.9 136.3" stroke="#a9a69c" stroke-width="1" fill="none"/><path d="M313.9 136.3L324.8 133.7" stroke="#a5a298" stroke-width="1" fill="none"/><path d="M324.8 133.7L336.0 138.0M220.2 171.2L227.1 167.2" stroke="#a09d94" stroke-width="1" fill="none"/><path d="M336.0 138.0L346.9 142.3M213.3 175.2L220.2 171.2M306.4 143.7L312.5 140.4" stroke="#9b988f" stroke-width="1" fill="none"/><path d="M346.9 142.3L357.7 146.5M210.5 182.6L213.3 175.2" stroke="#95928a" stroke-width="1" fill="none"/><path d="M357.7 146.5L368.3 150.6" stroke="#8e8c83" stroke-width="1" fill="none"/><path d="M378.7 154.6L388.8 158.6" stroke="#7f7d76" stroke-width="1" fill="none"/><path d="M397.3 168.3L405.7 177.9M145.8 268.9L148.0 262.2M466.6 184.4L471.3 187.8" stroke="#6f6d67" stroke-width="1" fill="none"/><path d="M405.7 177.9L414.0 187.3" stroke="#66655f" stroke-width="1" fill="none"/><path d="M414.0 187.3L422.1 196.6" stroke="#5d5c56" stroke-width="1" fill="none"/><path d="M422.1 196.6L430.2 205.8" stroke="#54524e" stroke-width="1" fill="none"/><path d="M430.2 205.8L438.1 214.8M439.6 207.9L438.1 214.8M501.1 231.1L502.6 235.5" stroke="#4a4945" stroke-width="1" fill="none"/><path d="M376.9 133.8L384.0 138.2" stroke="#a6a39a" stroke-width="1" fill="none"/><path d="M384.0 138.2L390.9 142.6" stroke="#a09e94" stroke-width="1" fill="none"/><path d="M390.9 142.6L397.6 146.9" stroke="#9a978e" stroke-width="1" fill="none"/><path d="M397.6 146.9L404.2 151.0" stroke="#939088" stroke-width="1" fill="none"/><path d="M416.9 159.1L420.6 168.9M437.4 166.7L442.6 168.6" stroke="#7b7972" stroke-width="1" fill="none"/><path d="M420.6 168.9L424.3 178.4M197.2 217.8L199.7 211.0" stroke="#727069" stroke-width="1" fill="none"/><path d="M427.8 187.8L431.3 197.0" stroke="#5f5d58" stroke-width="1" fill="none"/><path d="M431.3 197.0L434.7 206.0" stroke="#55534e" stroke-width="1" fill="none"/><path d="M434.7 206.0L438.1 214.8M456.7 215.7L447.3 215.2" stroke="#4b4945" stroke-width="1" fill="none"/><path d="M440.5 160.9L442.4 163.4" stroke="#918f86" stroke-width="1" fill="none"/><path d="M444.2 165.9L446.0 168.2" stroke="#84827a" stroke-width="1" fill="none"/><path d="M446.0 168.2L447.8 170.6M398.1 158.7L402.8 158.8M427.1 162.9L432.3 164.8" stroke="#7d7b74" stroke-width="1" fill="none"/><path d="M447.8 170.6L446.1 178.4M452.5 174.0L457.2 177.5" stroke="#76746d" stroke-width="1" fill="none"/><path d="M446.1 178.4L444.4 186.0" stroke="#6e6c65" stroke-width="1" fill="none"/><path d="M444.4 186.0L442.8 193.5M361.0 180.9L362.8 177.8" stroke="#65635d" stroke-width="1" fill="none"/><path d="M442.8 193.5L441.2 200.8" stroke="#5c5b55" stroke-width="1" fill="none"/><path d="M441.2 200.8L439.6 207.9" stroke="#53524d" stroke-width="1" fill="none"/><path d="M486.1 194.5L483.5 193.6M388.8 158.6L393.5 158.7M432.3 164.8L437.4 166.7" stroke="#7c7a73" stroke-width="1" fill="none"/><path d="M480.9 192.8L478.4 192.0" stroke="#73716b" stroke-width="1" fill="none"/><path d="M469.3 195.4L462.7 199.5" stroke="#63615c" stroke-width="1" fill="none"/><path d="M456.3 203.5L450.1 207.3M496.4 217.5L486.2 217.0" stroke="#565550" stroke-width="1" fill="none"/><path d="M450.1 207.3L444.0 211.1" stroke="#504e4a" stroke-width="1" fill="none"/><path d="M444.0 211.1L438.1 214.8" stroke="#494843" stroke-width="1" fill="none"/><path d="M518.8 236.6L513.0 231.7" stroke="#5e5d57" stroke-width="1" fill="none"/><path d="M507.4 226.8L501.8 222.1M275.0 208.8L274.4 201.8" stroke="#5b5954" stroke-width="1" fill="none"/><path d="M501.8 222.1L496.4 217.5" stroke="#595752" stroke-width="1" fill="none"/><path d="M486.2 217.0L476.1 216.5M357.7 198.6L357.7 194.7" stroke="#54524d" stroke-width="1" fill="none"/><path d="M476.1 216.5L466.3 216.1" stroke="#51504b" stroke-width="1" fill="none"/><path d="M466.3 216.1L456.7 215.7M499.5 226.6L501.1 231.1" stroke="#4e4d48" stroke-width="1" fill="none"/><path d="M447.3 215.2L438.1 214.8" stroke="#474642" stroke-width="1" fill="none"/><path d="M547.4 297.4L540.1 288.1" stroke="#393834" stroke-width="1" fill="none"/><path d="M491.8 258.6L480.9 249.7M134.8 385.9L133.0 379.4" stroke="#31302d" stroke-width="1" fill="none"/><path d="M129.4 366.2L127.5 359.5" stroke="#464540" stroke-width="1" fill="none"/><path d="M127.5 359.5L125.6 352.6" stroke="#4c4b47" stroke-width="1" fill="none"/><path d="M153.8 318.1L151.8 309.8" stroke="#3e3d39" stroke-width="1" fill="none"/><path d="M151.8 309.8L149.8 301.4" stroke="#474641" stroke-width="1" fill="none"/><path d="M149.8 301.4L147.8 292.9" stroke="#4f4e49" stroke-width="1" fill="none"/><path d="M143.7 275.3L145.8 268.9M273.7 194.7L273.0 187.5M362.8 177.8L364.5 174.8" stroke="#686660" stroke-width="1" fill="none"/><path d="M148.0 262.2L150.3 255.5M378.4 163.6L381.8 162.0" stroke="#77756e" stroke-width="1" fill="none"/><path d="M206.1 269.5L204.6 261.2" stroke="#3f3e3b" stroke-width="1" fill="none"/><path d="M204.6 261.2L203.2 252.8M357.9 210.2L357.9 206.3" stroke="#484743" stroke-width="1" fill="none"/><path d="M201.7 244.3L200.2 235.6" stroke="#595853" stroke-width="1" fill="none"/><path d="M198.7 226.7L197.2 217.8M476.0 191.3L479.4 195.7" stroke="#6a6862" stroke-width="1" fill="none"/><path d="M199.7 211.0L202.4 204.1M381.8 162.0L385.3 160.3" stroke="#797770" stroke-width="1" fill="none"/><path d="M202.4 204.1L205.0 197.1" stroke="#817f77" stroke-width="1" fill="none"/><path d="M205.0 197.1L207.7 189.9" stroke="#88867e" stroke-width="1" fill="none"/><path d="M227.1 167.2L234.2 163.2M333.2 133.7L341.8 133.7" stroke="#a5a299" stroke-width="1" fill="none"/><path d="M287.8 251.3L284.3 244.1M368.7 235.0L366.9 230.9" stroke="#31312e" stroke-width="1" fill="none"/><path d="M276.4 222.5L275.7 215.7" stroke="#4d4c47" stroke-width="1" fill="none"/><path d="M275.5 182.0L278.1 176.4" stroke="#74726c" stroke-width="1" fill="none"/><path d="M278.1 176.4L280.7 170.8M442.6 168.6L447.8 170.6" stroke="#7a7871" stroke-width="1" fill="none"/><path d="M280.7 170.8L283.4 165.1" stroke="#807e76" stroke-width="1" fill="none"/><path d="M283.4 165.1L286.1 159.3" stroke="#85837b" stroke-width="1" fill="none"/><path d="M286.1 159.3L288.9 153.4" stroke="#8b8880" stroke-width="1" fill="none"/><path d="M288.9 153.4L294.6 150.2" stroke="#8f8d84" stroke-width="1" fill="none"/><path d="M294.6 150.2L300.5 147.0" stroke="#939188" stroke-width="1" fill="none"/><path d="M312.5 140.4L318.6 137.1" stroke="#9e9b92" stroke-width="1" fill="none"/><path d="M318.6 137.1L324.8 133.7" stroke="#a19e95" stroke-width="1" fill="none"/><path d="M324.8 133.7L333.2 133.7" stroke="#a3a197" stroke-width="1" fill="none"/><path d="M341.8 133.7L350.4 133.7" stroke="#a6a49a" stroke-width="1" fill="none"/><path d="M350.4 133.7L359.1 133.7" stroke="#a7a59b" stroke-width="1" fill="none"/><path d="M359.1 133.7L368.0 133.7" stroke="#a8a59c" stroke-width="1" fill="none"/><path d="M533.8 255.6L536.5 264.1M357.7 194.7L357.6 190.8" stroke="#575651" stroke-width="1" fill="none"/><path d="M536.5 264.1L539.3 272.6" stroke="#514f4a" stroke-width="1" fill="none"/><path d="M539.3 272.6L542.0 280.9" stroke="#4a4844" stroke-width="1" fill="none"/><path d="M359.8 214.3L357.9 210.2" stroke="#45433f" stroke-width="1" fill="none"/><path d="M368.1 168.6L371.5 166.9" stroke="#716f68" stroke-width="1" fill="none"/><path d="M374.9 165.3L378.4 163.6" stroke="#75736c" stroke-width="1" fill="none"/><path d="M385.3 160.3L388.8 158.6" stroke="#7b7971" stroke-width="1" fill="none"/><path d="M393.5 158.7L398.1 158.7" stroke="#7d7b73" stroke-width="1" fill="none"/><path d="M407.4 158.9L412.2 159.0" stroke="#7e7c75" stroke-width="1" fill="none"/><path d="M412.2 159.0L416.9 159.1M416.9 159.1L422.0 161.0" stroke="#7f7d75" stroke-width="1" fill="none"/><path d="M457.2 177.5L461.9 180.9" stroke="#74726b" stroke-width="1" fill="none"/><path d="M461.9 180.9L466.6 184.4" stroke="#717069" stroke-width="1" fill="none"/><path d="M482.8 200.1L486.2 204.4" stroke="#63625c" stroke-width="1" fill="none"/><path d="M496.4 217.5L498.0 222.0" stroke="#56544f" stroke-width="1" fill="none"/><path d="M498.0 222.0L499.5 226.6" stroke="#52504c" stroke-width="1" fill="none"/><path d="M505.2 248.4L504.7 252.3" stroke="#3b3a36" stroke-width="1" fill="none"/><path d="M504.2 256.1L503.7 260.0" stroke="#33322f" stroke-width="1" fill="none"/><g clip-path="url(#bc)"><rect x="0" y="0" width="613" height="671" fill="url(#gl)"/><rect x="0" y="0" width="613" height="671" fill="url(#gedge)"/><path d="M110.0 94.0L540.0 94.0L540.0 283.0L410.0 283.0L380.0 288.0L340.0 293.0L280.0 294.0L220.0 291.0L170.0 287.0L110.0 284.0Z" fill="url(#gu)"/><path d="M110.0 94.0L540.0 94.0L540.0 283.0L410.0 283.0L380.0 288.0L340.0 293.0L280.0 294.0L220.0 291.0L170.0 287.0L110.0 284.0Z" fill="url(#guh)"/></g><path d="M221.2 503.9L235.9 511.9M235.9 511.9L250.5 519.8M250.5 519.8L265.0 527.7M265.0 527.7L279.4 535.5M279.4 535.5L293.6 543.2M293.6 543.2L307.8 550.9M307.8 550.9L322.9 551.2M322.9 551.2L337.9 551.5M337.9 551.5L352.6 551.8M352.6 551.8L367.2 552.0M367.2 552.0L381.6 552.3M381.6 552.3L395.8 552.6M395.8 552.6L407.9 545.8M221.2 503.9L232.5 512.3M232.5 512.3L243.6 520.5M243.6 520.5L254.6 528.6M254.6 528.6L265.4 536.5M265.4 536.5L276.0 544.4M276.0 544.4L286.4 552.0M286.4 552.0L298.5 552.5M298.5 552.5L310.3 552.9M221.2 503.9L227.7 511.0M227.7 511.0L234.2 517.8M234.2 517.8L240.5 524.6M240.5 524.6L246.6 531.1M246.6 531.1L252.6 537.5M252.6 537.5L258.4 543.8M221.2 503.9L222.4 508.2M222.4 508.2L223.5 512.3M223.5 512.3L224.7 516.3M224.7 516.3L225.8 520.2M225.8 520.2L226.8 524.0M221.2 503.9L217.1 504.3M217.1 504.3L213.2 504.6M213.2 504.6L209.4 505.0M209.4 505.0L205.7 505.3M205.7 505.3L202.1 505.6M221.2 503.9L212.8 499.9M212.8 499.9L204.7 496.0M204.7 496.0L196.8 492.2M196.8 492.2L189.0 488.4M189.0 488.4L181.4 484.8M181.4 484.8L174.0 481.2M221.2 503.9L210.1 495.7M210.1 495.7L199.2 487.6M199.2 487.6L188.5 479.6M188.5 479.6L178.0 471.8M178.0 471.8L167.7 464.1M167.7 464.1L157.6 456.5M157.6 456.5L153.9 445.3M153.9 445.3L150.3 434.3M221.2 503.9L209.3 492.2M209.3 492.2L197.6 480.6M197.6 480.6L186.0 469.2M186.0 469.2L174.5 457.8M174.5 457.8L163.1 446.5M221.2 503.9L210.7 490.1M210.7 490.1L200.3 476.3M200.3 476.3L189.8 462.4M221.2 503.9L214.0 489.6M214.0 489.6L206.9 475.2M221.2 503.9L218.8 490.9M218.8 490.9L216.5 477.6M221.2 503.9L224.3 493.7M224.3 493.7L227.6 483.3M227.6 483.3L230.9 472.7M221.2 503.9L229.7 497.7M229.7 497.7L238.4 491.3M238.4 491.3L247.3 484.8M221.2 503.9L234.1 502.2M234.1 502.2L247.2 500.4M247.2 500.4L260.6 498.6M260.6 498.6L274.2 496.7M274.2 496.7L288.0 494.9M288.0 494.9L302.2 492.9M221.2 503.9L236.8 506.5M236.8 506.5L252.5 509.0M252.5 509.0L268.5 511.6M268.5 511.6L284.6 514.2M284.6 514.2L300.9 516.8M300.9 516.8L317.4 519.5M317.4 519.5L334.8 515.6M334.8 515.6L352.3 511.7M352.3 511.7L369.8 507.8M369.8 507.8L387.3 503.8M387.3 503.8L404.9 499.9M404.9 499.9L422.4 496.0M422.4 496.0L436.8 486.4M436.8 486.4L451.1 476.8M451.1 476.8L465.3 467.4M465.3 467.4L479.3 458.0M479.3 458.0L493.2 448.7M493.2 448.7L507.1 439.4M507.1 439.4L514.6 426.9M514.6 426.9L522.0 414.5M522.0 414.5L529.2 402.3M529.2 402.3L536.4 390.3M536.4 390.3L543.5 378.5M543.5 378.5L550.4 366.9M550.4 366.9L549.9 354.7M549.9 354.7L549.4 342.8M221.2 503.9L237.4 509.9M237.4 509.9L253.7 515.8M253.7 515.8L270.0 521.8M270.0 521.8L286.3 527.8M286.3 527.8L302.6 533.8M302.6 533.8L319.0 539.7M319.0 539.7L336.1 538.6M336.1 538.6L353.1 537.5M353.1 537.5L370.1 536.3M370.1 536.3L386.9 535.2M386.9 535.2L403.6 534.1M403.6 534.1L420.2 532.9M420.2 532.9L433.9 525.1M433.9 525.1L447.3 517.3M447.3 517.3L460.6 509.7M460.6 509.7L473.7 502.1M473.7 502.1L486.7 494.6M486.7 494.6L499.5 487.2M499.5 487.2L506.7 475.0M506.7 475.0L513.7 462.9M513.7 462.9L520.7 451.1M307.8 550.9L304.1 551.1M304.1 551.1L300.5 551.3M300.5 551.3L296.9 551.5M296.9 551.5L293.4 551.7M293.4 551.7L289.9 551.9M289.9 551.9L286.4 552.0M286.4 552.0L281.6 550.6M281.6 550.6L276.9 549.3M276.9 549.3L272.3 547.9M272.3 547.9L267.6 546.5M267.6 546.5L263.0 545.1M171.3 477.1L168.6 473.1M168.6 473.1L165.9 469.0M165.9 469.0L163.1 464.9M163.1 464.9L160.4 460.7M160.4 460.7L157.6 456.5M157.6 456.5L156.6 453.1M156.6 453.1L155.7 449.6M155.7 449.6L154.7 446.1M154.7 446.1L153.8 442.5M153.8 442.5L152.8 438.9M302.2 492.9L304.7 497.5M304.7 497.5L307.3 501.9M307.3 501.9L309.8 506.4M309.8 506.4L312.4 510.8M312.4 510.8L314.9 515.2M314.9 515.2L317.4 519.5M317.4 519.5L317.7 523.0M317.7 523.0L317.9 526.4M317.9 526.4L318.2 529.8M318.2 529.8L318.5 533.1M318.5 533.1L318.7 536.5M318.7 536.5L319.0 539.7M319.0 539.7L317.1 541.6M317.1 541.6L315.2 543.5M315.2 543.5L313.3 545.4M313.3 545.4L311.4 547.2M311.4 547.2L309.6 549.1M309.6 549.1L307.8 550.9M395.8 552.6L388.8 552.9M410.7 471.5L414.7 479.8M414.7 479.8L418.6 487.9M418.6 487.9L422.4 496.0M422.4 496.0L422.0 502.4M422.0 502.4L421.7 508.7M421.7 508.7L421.3 514.9M421.3 514.9L420.9 521.0M420.9 521.0L420.6 527.0M420.6 527.0L420.2 532.9M420.2 532.9L416.0 536.4M416.0 536.4L411.8 539.7M411.8 539.7L407.7 543.0M407.7 543.0L403.6 546.3M403.6 546.3L399.7 549.5M399.7 549.5L395.8 552.6M503.0 429.2L507.1 439.4M507.1 439.4L505.7 447.8M505.7 447.8L504.4 456.0M504.4 456.0L503.2 464.0M503.2 464.0L501.9 471.9M501.9 471.9L500.7 479.6M500.7 479.6L499.5 487.2M499.5 487.2L493.6 491.8M493.6 491.8L487.8 496.3M550.4 366.9L548.7 375.6M548.7 375.6L547.1 384.1M547.1 384.1L545.5 392.4" stroke="#78766f" stroke-width="1" fill="none"/><path d="M163.1 446.5L151.8 435.3M216.5 477.6L214.1 464.1M152.8 438.9L151.8 435.3" stroke="#7a7871" stroke-width="1" fill="none"/><path d="M151.8 435.3L147.3 421.0" stroke="#7e7b74" stroke-width="1" fill="none"/><path d="M147.3 421.0L142.8 407.0M199.6 460.6L192.3 445.8M402.7 454.7L406.7 463.2" stroke="#817f77" stroke-width="1" fill="none"/><path d="M142.8 407.0L138.4 393.1M365.9 461.9L382.2 454.0" stroke="#85837b" stroke-width="1" fill="none"/><path d="M138.4 393.1L134.1 379.4M269.6 460.3L275.2 464.5" stroke="#88867e" stroke-width="1" fill="none"/><path d="M134.1 379.4L129.8 365.9M258.2 451.9L263.9 456.1" stroke="#8c8981" stroke-width="1" fill="none"/><path d="M129.8 365.9L125.6 352.6M287.5 452.7L299.8 440.8M426.6 422.3L440.6 410.5M246.9 443.5L252.6 447.7" stroke="#8f8d84" stroke-width="1" fill="none"/><path d="M189.8 462.4L179.4 448.5M293.2 483.5L297.7 488.2M406.7 463.2L410.7 471.5" stroke="#7b7972" stroke-width="1" fill="none"/><path d="M179.4 448.5L168.9 434.6" stroke="#827f78" stroke-width="1" fill="none"/><path d="M168.9 434.6L158.4 420.8M234.3 461.8L237.7 450.7M382.2 454.0L398.6 446.1M539.7 335.5L543.3 346.1" stroke="#87857d" stroke-width="1" fill="none"/><path d="M158.4 420.8L154.6 404.1M252.6 447.7L258.2 451.9" stroke="#8d8b83" stroke-width="1" fill="none"/><path d="M154.6 404.1L150.8 387.6M174.2 416.7L177.4 415.8M125.6 352.6L127.3 347.8" stroke="#939088" stroke-width="1" fill="none"/><path d="M150.8 387.6L147.1 371.2" stroke="#99968d" stroke-width="1" fill="none"/><path d="M147.1 371.2L143.3 354.9M324.9 416.7L337.7 404.5M521.1 314.3L528.5 302.7M530.9 246.9L524.8 241.7M358.7 401.3L366.8 410.4" stroke="#9e9b92" stroke-width="1" fill="none"/><path d="M143.3 354.9L139.6 338.7" stroke="#a3a197" stroke-width="1" fill="none"/><path d="M139.6 338.7L135.9 322.6" stroke="#a8a59c" stroke-width="1" fill="none"/><path d="M135.9 322.6L139.6 307.4" stroke="#adaaa0" stroke-width="1" fill="none"/><path d="M139.6 307.4L143.2 292.5" stroke="#b1aea4" stroke-width="1" fill="none"/><path d="M143.2 292.5L146.8 277.7M279.4 361.5L287.3 345.4M400.4 335.2L412.7 321.1" stroke="#b5b2a8" stroke-width="1" fill="none"/><path d="M146.8 277.7L150.3 263.1M491.6 196.2L488.8 195.3M276.3 340.4L287.3 345.4M484.6 247.2L493.5 258.5" stroke="#b9b6ab" stroke-width="1" fill="none"/><path d="M150.3 263.1L153.8 248.7M433.8 294.7L442.4 282.5" stroke="#bdb9ae" stroke-width="1" fill="none"/><path d="M153.8 248.7L157.2 234.4M195.2 312.3L204.2 313.5M204.2 313.5L213.2 314.7" stroke="#bfbcb1" stroke-width="1" fill="none"/><path d="M157.2 234.4L166.9 224.2" stroke="#c2bfb3" stroke-width="1" fill="none"/><path d="M166.9 224.2L176.5 214.1" stroke="#c4c1b5" stroke-width="1" fill="none"/><path d="M206.9 475.2L199.6 460.6M247.3 484.8L256.4 478.2M302.2 492.9L317.9 485.3M549.4 342.8L548.9 331.1M297.7 488.2L302.2 492.9M546.9 356.6L550.4 366.9" stroke="#797770" stroke-width="1" fill="none"/><path d="M192.3 445.8L184.9 430.9" stroke="#89867e" stroke-width="1" fill="none"/><path d="M184.9 430.9L177.4 415.8M382.8 428.4L390.7 437.3" stroke="#908e85" stroke-width="1" fill="none"/><path d="M177.4 415.8L176.0 398.0M481.9 375.5L490.0 362.8M127.3 347.8L128.9 342.9" stroke="#97958c" stroke-width="1" fill="none"/><path d="M176.0 398.0L174.6 380.2" stroke="#9e9c92" stroke-width="1" fill="none"/><path d="M174.6 380.2L173.3 362.3" stroke="#a5a299" stroke-width="1" fill="none"/><path d="M173.3 362.3L171.9 344.5M135.9 322.6L141.2 320.4M444.3 330.3L453.8 341.7" stroke="#aca99f" stroke-width="1" fill="none"/><path d="M171.9 344.5L170.5 326.6M388.0 349.3L400.4 335.2M146.6 318.1L152.1 315.8" stroke="#b2afa5" stroke-width="1" fill="none"/><path d="M170.5 326.6L169.1 308.7" stroke="#b8b5ab" stroke-width="1" fill="none"/><path d="M169.1 308.7L174.2 292.3M442.4 282.5L450.9 270.5M186.4 311.1L195.2 312.3M154.9 241.6L157.2 234.4" stroke="#bebbb0" stroke-width="1" fill="none"/><path d="M174.2 292.3L179.2 276.0" stroke="#c3c0b5" stroke-width="1" fill="none"/><path d="M179.2 276.0L184.2 259.8M229.8 299.1L237.0 282.3M438.5 158.3L440.5 160.9M450.8 217.7L463.2 226.8" stroke="#c8c5b9" stroke-width="1" fill="none"/><path d="M184.2 259.8L189.1 243.8M327.2 281.3L337.1 265.4M359.9 259.1L372.9 268.7M438.5 208.6L450.8 217.7" stroke="#cdc9bd" stroke-width="1" fill="none"/><path d="M189.1 243.8L194.0 227.9M426.1 199.5L438.5 208.6" stroke="#d1cdc1" stroke-width="1" fill="none"/><path d="M194.0 227.9L198.9 212.1M191.6 216.0L198.9 212.1M386.7 137.3L396.5 141.0" stroke="#d4d1c4" stroke-width="1" fill="none"/><path d="M198.9 212.1L208.8 201.4M413.7 172.3L419.6 168.0" stroke="#d7d3c7" stroke-width="1" fill="none"/><path d="M208.8 201.4L218.6 190.9M383.9 203.3L392.7 192.2M392.7 192.2L401.4 181.3M241.5 159.0L248.8 154.7" stroke="#d9d6c9" stroke-width="1" fill="none"/><path d="M218.6 190.9L228.3 180.5M242.7 214.8L254.1 215.5M265.7 216.2L279.0 221.6" stroke="#dbd8cb" stroke-width="1" fill="none"/><path d="M228.3 180.5L237.8 170.3M256.4 150.4L268.3 147.5M265.7 216.2L275.6 204.9M374.7 171.1L388.0 176.2" stroke="#ddd9cc" stroke-width="1" fill="none"/><path d="M237.8 170.3L247.1 160.3M247.1 160.3L256.4 150.4" stroke="#dddacd" stroke-width="1" fill="none"/><path d="M268.3 147.5L280.1 144.6M254.1 215.5L265.7 216.2" stroke="#dcd8cb" stroke-width="1" fill="none"/><path d="M280.1 144.6L291.6 141.8M279.0 221.6L292.3 227.1" stroke="#dad7ca" stroke-width="1" fill="none"/><path d="M214.1 464.1L211.6 450.4" stroke="#838079" stroke-width="1" fill="none"/><path d="M211.6 450.4L209.1 436.4" stroke="#8b8880" stroke-width="1" fill="none"/><path d="M209.1 436.4L206.6 422.2M235.4 436.4L241.3 439.3" stroke="#929087" stroke-width="1" fill="none"/><path d="M206.6 422.2L209.2 404.8M472.6 364.3L481.9 375.5" stroke="#9a978e" stroke-width="1" fill="none"/><path d="M209.2 404.8L211.8 387.3M519.9 291.8L528.5 302.7" stroke="#a19f95" stroke-width="1" fill="none"/><path d="M211.8 387.3L214.4 369.6M134.1 327.8L135.9 322.6" stroke="#a9a69c" stroke-width="1" fill="none"/><path d="M214.4 369.6L217.1 351.9" stroke="#b0ada3" stroke-width="1" fill="none"/><path d="M217.1 351.9L219.7 334.0M287.3 345.4L297.9 353.2M425.0 307.0L434.7 318.7" stroke="#b7b4a9" stroke-width="1" fill="none"/><path d="M219.7 334.0L222.4 316.0M486.6 208.8L489.1 202.4M177.7 309.9L186.4 311.1" stroke="#bdbaaf" stroke-width="1" fill="none"/><path d="M222.4 316.0L229.8 299.1M157.2 234.4L163.8 230.9M464.1 175.9L473.3 182.7" stroke="#c3c0b4" stroke-width="1" fill="none"/><path d="M237.0 282.3L244.3 265.6" stroke="#cecabe" stroke-width="1" fill="none"/><path d="M244.3 265.6L251.5 249.1M425.4 163.8L431.0 159.7" stroke="#d2cfc2" stroke-width="1" fill="none"/><path d="M251.5 249.1L258.6 232.6M234.2 163.2L241.5 159.0" stroke="#d6d3c6" stroke-width="1" fill="none"/><path d="M258.6 232.6L265.7 216.2" stroke="#dad6ca" stroke-width="1" fill="none"/><path d="M275.6 204.9L285.4 193.8" stroke="#dfdccf" stroke-width="1" fill="none"/><path d="M285.4 193.8L294.9 182.9M348.5 161.1L361.5 166.1" stroke="#e1ddd0" stroke-width="1" fill="none"/><path d="M294.9 182.9L304.3 172.2M304.3 172.2L313.6 161.7M322.7 151.3L332.3 148.2M288.8 150.9L299.9 151.0M299.9 151.0L311.2 151.2M311.2 151.2L322.7 151.3M322.7 151.3L335.5 156.2" stroke="#e3dfd2" stroke-width="1" fill="none"/><path d="M313.6 161.7L322.7 151.3" stroke="#e3e0d2" stroke-width="1" fill="none"/><path d="M332.3 148.2L341.6 145.2M277.8 150.7L288.8 150.9M335.5 156.2L348.5 161.1" stroke="#e2ded1" stroke-width="1" fill="none"/><path d="M341.6 145.2L350.7 142.2M267.0 150.6L277.8 150.7" stroke="#e0dccf" stroke-width="1" fill="none"/><path d="M350.7 142.2L359.7 139.3" stroke="#dedacd" stroke-width="1" fill="none"/><path d="M359.7 139.3L368.4 136.5M231.5 214.1L242.7 214.8M388.0 176.2L401.4 181.3" stroke="#dbd7ca" stroke-width="1" fill="none"/><path d="M368.4 136.5L376.9 133.8M365.7 226.0L374.9 214.6M305.8 232.6L319.4 238.2" stroke="#d7d4c7" stroke-width="1" fill="none"/><path d="M230.9 472.7L234.3 461.8" stroke="#807e76" stroke-width="1" fill="none"/><path d="M237.7 450.7L241.3 439.3M164.6 419.1L167.8 418.3" stroke="#8e8c84" stroke-width="1" fill="none"/><path d="M241.3 439.3L248.7 424.1M191.8 419.0L196.7 420.0M212.3 425.0L218.0 427.8" stroke="#95938a" stroke-width="1" fill="none"/><path d="M248.7 424.1L256.3 408.7M505.8 338.2L513.5 326.2M128.9 342.9L130.6 338.0M530.9 246.9L533.8 255.6" stroke="#9c9990" stroke-width="1" fill="none"/><path d="M256.3 408.7L263.9 393.1" stroke="#a3a097" stroke-width="1" fill="none"/><path d="M263.9 393.1L271.7 377.4" stroke="#a9a79d" stroke-width="1" fill="none"/><path d="M271.7 377.4L279.4 361.5" stroke="#b0ada2" stroke-width="1" fill="none"/><path d="M287.3 345.4L297.4 329.3M489.1 202.4L491.6 196.2M265.4 335.4L276.3 340.4" stroke="#bbb8ad" stroke-width="1" fill="none"/><path d="M297.4 329.3L307.4 313.2M213.2 314.7L222.4 316.0" stroke="#c0bdb1" stroke-width="1" fill="none"/><path d="M307.4 313.2L317.3 297.2" stroke="#c5c1b6" stroke-width="1" fill="none"/><path d="M317.3 297.2L327.2 281.3M372.9 268.7L385.9 278.3M445.7 162.4L454.9 169.2" stroke="#c9c6ba" stroke-width="1" fill="none"/><path d="M337.1 265.4L347.0 249.6M416.4 148.3L426.4 152.0" stroke="#d0cdc1" stroke-width="1" fill="none"/><path d="M347.0 249.6L356.4 237.7M333.1 243.9L347.0 249.6" stroke="#d3cfc3" stroke-width="1" fill="none"/><path d="M356.4 237.7L365.7 226.0M319.4 238.2L333.1 243.9M368.0 133.7L376.9 133.8M376.9 133.8L386.7 137.3" stroke="#d5d2c5" stroke-width="1" fill="none"/><path d="M374.9 214.6L383.9 203.3M407.6 176.8L413.7 172.3M209.6 212.8L220.4 213.4" stroke="#d8d5c8" stroke-width="1" fill="none"/><path d="M401.4 181.3L407.6 176.8M292.3 227.1L305.8 232.6" stroke="#d9d5c9" stroke-width="1" fill="none"/><path d="M419.6 168.0L425.4 163.8" stroke="#d5d1c5" stroke-width="1" fill="none"/><path d="M431.0 159.7L436.5 155.7" stroke="#cfccc0" stroke-width="1" fill="none"/><path d="M436.5 155.7L438.5 158.3" stroke="#ccc8bc" stroke-width="1" fill="none"/><path d="M256.4 478.2L265.7 471.4M333.8 477.6L349.8 469.8" stroke="#7f7d75" stroke-width="1" fill="none"/><path d="M265.7 471.4L275.2 464.5M155.0 428.1L156.2 425.7" stroke="#84827a" stroke-width="1" fill="none"/><path d="M275.2 464.5L287.5 452.7M263.9 456.1L269.6 460.3" stroke="#8a877f" stroke-width="1" fill="none"/><path d="M299.8 440.8L312.3 428.9M182.2 416.9L187.0 417.9M218.0 427.8L223.8 430.7" stroke="#949289" stroke-width="1" fill="none"/><path d="M312.3 428.9L324.9 416.7M490.0 362.8L498.0 350.4M366.8 410.4L374.8 419.4" stroke="#99978e" stroke-width="1" fill="none"/><path d="M337.7 404.5L350.6 392.1M350.6 392.1L358.7 401.3" stroke="#a3a096" stroke-width="1" fill="none"/><path d="M350.6 392.1L363.1 377.8" stroke="#a7a49a" stroke-width="1" fill="none"/><path d="M363.1 377.8L375.6 363.5" stroke="#aba89e" stroke-width="1" fill="none"/><path d="M375.6 363.5L388.0 349.3M141.2 320.4L146.6 318.1M504.9 213.3L511.5 221.8" stroke="#afaca2" stroke-width="1" fill="none"/><path d="M412.7 321.1L425.0 307.0M157.7 313.5L163.4 311.1M491.6 196.2L498.3 204.8" stroke="#b8b5aa" stroke-width="1" fill="none"/><path d="M425.0 307.0L433.8 294.7" stroke="#bbb7ad" stroke-width="1" fill="none"/><path d="M450.9 270.5L459.3 258.8M222.4 316.0L233.0 320.8M473.3 182.7L482.4 189.4" stroke="#c0bcb1" stroke-width="1" fill="none"/><path d="M459.3 258.8L467.5 247.2M478.4 228.8L481.2 222.0" stroke="#c1bdb2" stroke-width="1" fill="none"/><path d="M467.5 247.2L475.6 235.8" stroke="#c1beb2" stroke-width="1" fill="none"/><path d="M475.6 235.8L478.4 228.8" stroke="#c1beb3" stroke-width="1" fill="none"/><path d="M481.2 222.0L483.9 215.3M398.9 287.9L411.9 297.5" stroke="#c0bdb2" stroke-width="1" fill="none"/><path d="M483.9 215.3L486.6 208.8" stroke="#bfbcb0" stroke-width="1" fill="none"/><path d="M488.8 195.3L486.1 194.5" stroke="#b6b3a9" stroke-width="1" fill="none"/><path d="M317.9 485.3L333.8 477.6" stroke="#7c7a73" stroke-width="1" fill="none"/><path d="M349.8 469.8L365.9 461.9M154.0 430.5L155.0 428.1" stroke="#828078" stroke-width="1" fill="none"/><path d="M398.6 446.1L412.6 434.2" stroke="#8a8880" stroke-width="1" fill="none"/><path d="M412.6 434.2L426.6 422.3M161.5 420.0L164.6 419.1" stroke="#8d8a82" stroke-width="1" fill="none"/><path d="M440.6 410.5L454.4 398.8" stroke="#918f87" stroke-width="1" fill="none"/><path d="M454.4 398.8L468.2 387.1M177.4 415.8L182.2 416.9M223.8 430.7L229.6 433.5" stroke="#949189" stroke-width="1" fill="none"/><path d="M468.2 387.1L481.9 375.5M196.7 420.0L201.6 421.1" stroke="#96938a" stroke-width="1" fill="none"/><path d="M498.0 350.4L505.8 338.2" stroke="#9b988f" stroke-width="1" fill="none"/><path d="M513.5 326.2L521.1 314.3" stroke="#9d9a91" stroke-width="1" fill="none"/><path d="M528.5 302.7L528.9 292.9M528.9 292.9L529.4 283.2M530.2 264.7L530.5 255.7M530.5 255.7L530.9 246.9" stroke="#9f9c93" stroke-width="1" fill="none"/><path d="M529.4 283.2L529.8 273.8M529.8 273.8L530.2 264.7" stroke="#9f9d93" stroke-width="1" fill="none"/><path d="M151.8 435.3L152.9 432.9" stroke="#7d7b74" stroke-width="1" fill="none"/><path d="M152.9 432.9L154.0 430.5M494.8 408.2L498.9 418.8" stroke="#7f7d76" stroke-width="1" fill="none"/><path d="M156.2 425.7L157.3 423.2" stroke="#87847d" stroke-width="1" fill="none"/><path d="M157.3 423.2L158.4 420.8" stroke="#89877f" stroke-width="1" fill="none"/><path d="M158.4 420.8L161.5 420.0M390.7 437.3L398.6 446.1" stroke="#8b8981" stroke-width="1" fill="none"/><path d="M167.8 418.3L170.9 417.5" stroke="#908d85" stroke-width="1" fill="none"/><path d="M170.9 417.5L174.2 416.7M241.3 439.3L246.9 443.5" stroke="#918f86" stroke-width="1" fill="none"/><path d="M187.0 417.9L191.8 419.0M374.8 419.4L382.8 428.4" stroke="#95928a" stroke-width="1" fill="none"/><path d="M201.6 421.1L206.6 422.2" stroke="#96948b" stroke-width="1" fill="none"/><path d="M206.6 422.2L212.3 425.0" stroke="#96938b" stroke-width="1" fill="none"/><path d="M229.6 433.5L235.4 436.4M481.9 375.5L486.3 386.6" stroke="#939188" stroke-width="1" fill="none"/><path d="M275.2 464.5L279.8 469.2M398.6 446.1L402.7 454.7M490.6 397.5L494.8 408.2" stroke="#86847c" stroke-width="1" fill="none"/><path d="M279.8 469.2L284.3 474.0" stroke="#838179" stroke-width="1" fill="none"/><path d="M284.3 474.0L288.8 478.8" stroke="#817e77" stroke-width="1" fill="none"/><path d="M288.8 478.8L293.2 483.5" stroke="#7e7c75" stroke-width="1" fill="none"/><path d="M130.6 338.0L132.4 332.9" stroke="#a09e94" stroke-width="1" fill="none"/><path d="M132.4 332.9L134.1 327.8" stroke="#a4a298" stroke-width="1" fill="none"/><path d="M152.1 315.8L157.7 313.5" stroke="#b5b2a7" stroke-width="1" fill="none"/><path d="M163.4 311.1L169.1 308.7" stroke="#bab7ac" stroke-width="1" fill="none"/><path d="M169.1 308.7L177.7 309.9M254.5 330.5L265.4 335.4M411.9 297.5L425.0 307.0M482.4 189.4L491.6 196.2" stroke="#bcb9ae" stroke-width="1" fill="none"/><path d="M233.0 320.8L243.7 325.6M475.6 235.8L484.6 247.2" stroke="#bfbbb0" stroke-width="1" fill="none"/><path d="M243.7 325.6L254.5 330.5" stroke="#bebaaf" stroke-width="1" fill="none"/><path d="M297.9 353.2L308.4 361.0M493.5 258.5L502.4 269.7M498.3 204.8L504.9 213.3" stroke="#b4b1a6" stroke-width="1" fill="none"/><path d="M308.4 361.0L318.9 368.7" stroke="#b1aea3" stroke-width="1" fill="none"/><path d="M318.9 368.7L329.5 376.5" stroke="#adaba0" stroke-width="1" fill="none"/><path d="M329.5 376.5L340.0 384.3" stroke="#aaa79d" stroke-width="1" fill="none"/><path d="M340.0 384.3L350.6 392.1" stroke="#a6a49a" stroke-width="1" fill="none"/><path d="M152.5 248.6L154.9 241.6" stroke="#bab6ac" stroke-width="1" fill="none"/><path d="M163.8 230.9L170.6 227.3" stroke="#c7c4b8" stroke-width="1" fill="none"/><path d="M170.6 227.3L177.4 223.6" stroke="#cbc8bc" stroke-width="1" fill="none"/><path d="M177.4 223.6L184.4 219.8" stroke="#cecbbf" stroke-width="1" fill="none"/><path d="M184.4 219.8L191.6 216.0M406.4 144.6L416.4 148.3" stroke="#d2cec2" stroke-width="1" fill="none"/><path d="M198.9 212.1L209.6 212.8" stroke="#d7d3c6" stroke-width="1" fill="none"/><path d="M220.4 213.4L231.5 214.1" stroke="#dad6c9" stroke-width="1" fill="none"/><path d="M347.0 249.6L359.9 259.1" stroke="#d0cdc0" stroke-width="1" fill="none"/><path d="M385.9 278.3L398.9 287.9" stroke="#c5c2b6" stroke-width="1" fill="none"/><path d="M434.7 318.7L444.3 330.3" stroke="#b2afa4" stroke-width="1" fill="none"/><path d="M453.8 341.7L463.3 353.1M518.0 230.2L524.5 238.6" stroke="#a6a399" stroke-width="1" fill="none"/><path d="M463.3 353.1L472.6 364.3" stroke="#a09d94" stroke-width="1" fill="none"/><path d="M486.3 386.6L490.6 397.5" stroke="#8d8b82" stroke-width="1" fill="none"/><path d="M498.9 418.8L503.0 429.2" stroke="#79776f" stroke-width="1" fill="none"/><path d="M248.8 154.7L256.4 150.4" stroke="#dcd8cc" stroke-width="1" fill="none"/><path d="M256.4 150.4L267.0 150.6" stroke="#dedbce" stroke-width="1" fill="none"/><path d="M361.5 166.1L374.7 171.1" stroke="#dfdbce" stroke-width="1" fill="none"/><path d="M401.4 181.3L413.8 190.4" stroke="#d8d4c8" stroke-width="1" fill="none"/><path d="M413.8 190.4L426.1 199.5" stroke="#d4d1c5" stroke-width="1" fill="none"/><path d="M463.2 226.8L475.6 235.8" stroke="#c4c0b5" stroke-width="1" fill="none"/><path d="M502.4 269.7L511.2 280.8" stroke="#aeaba1" stroke-width="1" fill="none"/><path d="M511.2 280.8L519.9 291.8" stroke="#a8a59b" stroke-width="1" fill="none"/><path d="M528.5 302.7L532.3 313.8" stroke="#9b998f" stroke-width="1" fill="none"/><path d="M532.3 313.8L536.0 324.8" stroke="#959289" stroke-width="1" fill="none"/><path d="M536.0 324.8L539.7 335.5" stroke="#8e8c83" stroke-width="1" fill="none"/><path d="M543.3 346.1L546.9 356.6" stroke="#807e77" stroke-width="1" fill="none"/><path d="M396.5 141.0L406.4 144.6" stroke="#d3d0c3" stroke-width="1" fill="none"/><path d="M426.4 152.0L436.5 155.7" stroke="#cfcbbf" stroke-width="1" fill="none"/><path d="M436.5 155.7L445.7 162.4" stroke="#ccc9bd" stroke-width="1" fill="none"/><path d="M454.9 169.2L464.1 175.9" stroke="#c6c3b7" stroke-width="1" fill="none"/><path d="M511.5 221.8L518.0 230.2" stroke="#aaa89e" stroke-width="1" fill="none"/><path d="M524.5 238.6L530.9 246.9" stroke="#a19e95" stroke-width="1" fill="none"/><rect x="503" y="13" width="16" height="225" fill="url(#cw)"/><rect x="516" y="11.8" width="12" height="1.5" fill="#fff"/><text x="533" y="17.3" font-size="16" fill="#fff" font-family="Liberation Sans">1.0e+00</text><rect x="516" y="56.8" width="12" height="1.5" fill="#fff"/><text x="533" y="62.3" font-size="16" fill="#fff" font-family="Liberation Sans">0.8</text><rect x="516" y="101.8" width="12" height="1.5" fill="#fff"/><text x="533" y="107.3" font-size="16" fill="#fff" font-family="Liberation Sans">0.6</text><rect x="516" y="146.8" width="12" height="1.5" fill="#fff"/><text x="533" y="152.3" font-size="16" fill="#fff" font-family="Liberation Sans">0.4</text><rect x="516" y="191.8" width="12" height="1.5" fill="#fff"/><text x="533" y="197.3" font-size="16" fill="#fff" font-family="Liberation Sans">0.2</text><rect x="516" y="236.8" width="12" height="1.5" fill="#fff"/><text x="533" y="242.3" font-size="16" fill="#fff" font-family="Liberation Sans">0.0e+00</text><text transform="translate(610,125) rotate(-90)" text-anchor="middle" font-size="17" fill="#fff" font-family="Liberation Sans">cutout mask</text><rect x="497" y="446" width="16" height="230" fill="url(#rb)"/><rect x="510" y="445.2" width="12" height="1.5" fill="#fff"/><text x="528" y="450.8" font-size="16" fill="#fff" font-family="Liberation Sans">1.5e+02</text><rect x="510" y="519.5" width="12" height="1.5" fill="#fff"/><text x="528" y="525.1" font-size="16" fill="#fff" font-family="Liberation Sans">100</text><rect x="510" y="597.9" width="12" height="1.5" fill="#fff"/><text x="528" y="603.4" font-size="16" fill="#fff" font-family="Liberation Sans">50</text><rect x="510" y="673.2" width="12" height="1.5" fill="#fff"/><text x="528" y="678.8" font-size="16" fill="#fff" font-family="Liberation Sans">2.0e+00</text><text transform="translate(605,558) rotate(-90)" text-anchor="middle" font-size="17" fill="#fff" font-family="Liberation Sans">activation bipolar (ms)</text><line x1="85.60000000000002" y1="597" x2="66" y2="567" stroke="#e8d800" stroke-width="1"/><path d="M60 559L63 571L71 564Z" fill="#f0e000"/><line x1="85.60000000000002" y1="597" x2="114" y2="596.4" stroke="#d00000" stroke-width="1.2"/><path d="M122 595.3L113 591L113 600Z" fill="#e00000"/><line x1="85.60000000000002" y1="597" x2="66" y2="624" stroke="#00c000" stroke-width="1"/><path d="M59 632L62 620L70 626Z" fill="#00e000"/><text x="67" y="567.5" font-size="14.5" fill="#fff" font-family="Liberation Sans">Y</text><text x="116.5" y="597" font-size="14.5" fill="#fff" font-family="Liberation Sans">X</text><text x="66.5" y="626.5" font-size="14.5" fill="#fff" font-family="Liberation Sans">Z</text><path d="M332.7 337.59999999999997L339.5 345.79999999999995L345.0 337.59999999999997M339.5 345.79999999999995L347.7 345.79999999999995" stroke="#fff" stroke-width="1.1" fill="none"/></svg>
<div class="r" style="left:589px;top:154px;width:123px;height:21px;background:linear-gradient(#7ba7fb,#4a82f4 60%,#3b76f1);border-radius:5px 0 0 5px;"></div>
<div class="r" style="left:712px;top:154px;width:30px;height:21px;background:#fff;border:1px solid #d8d4b8;border-left:none;border-radius:0 5px 5px 0;"></div>
<div class="r" style="left:592px;top:160px;width:9px;height:9px;background:#4a82f4;border:1.3px solid #000;"></div>
<div class="t" style="left:617.7px;top:159.0px;font-size:13px;line-height:13px;font-weight:normal;color:#fff;letter-spacing:-0.016px;">Layout #1</div>
<svg class="s" style="left:691px;top:158px;" width="14" height="14" viewBox="0 0 14 14"><circle cx="7" cy="7" r="6.8" fill="#444"/><path d="M4.3 4.3L9.7 9.7M9.7 4.3L4.3 9.7" stroke="#fff" stroke-width="2" stroke-linecap="round"/></svg>
<svg class="s" style="left:722px;top:158px;" width="14" height="14" viewBox="0 0 14 14"><path d="M7 2.5V11.5M2.5 7H11.5" stroke="#000" stroke-width="1.4"/></svg>
<div class="r" style="left:357px;top:180px;width:427px;height:22px;background:linear-gradient(#f2f2f2,#e2e2e2 50%,#cfcfcf);border-top:1px solid #fdfdfd;border-bottom:1px solid #b8b8b8;"></div>
<div class="r" style="left:784px;top:180px;width:193px;height:22px;background:#ececec;"></div>
<div class="r" style="left:403px;top:182px;width:1px;height:18px;background:repeating-linear-gradient(#777 0 1px,transparent 1px 3px);"></div>
<div class="r" style="left:431px;top:182px;width:1px;height:18px;background:repeating-linear-gradient(#777 0 1px,transparent 1px 3px);"></div>
<div class="r" style="left:481px;top:182px;width:1px;height:18px;background:repeating-linear-gradient(#777 0 1px,transparent 1px 3px);"></div>
<div class="r" style="left:553px;top:182px;width:1px;height:18px;background:repeating-linear-gradient(#777 0 1px,transparent 1px 3px);"></div>
<svg class="s" style="left:357.5px;top:181px;" width="20" height="20" viewBox="0 0 20 20"><g transform="translate(10,10) scale(0.85)"><rect x="-5" y="-6" width="11" height="9" rx="1" fill="#d8d8d0" stroke="#777766" stroke-width="1"/><circle cx="0.5" cy="-1.5" r="2.6" fill="none" stroke="#777766" stroke-width="1"/><rect x="-3" y="-7.5" width="4" height="2" fill="#777766"/><path d="M1 7C2 2 -4 1 -6 4" stroke="#e84a30" stroke-width="2.2" fill="none"/><path d="M-9 2L-5 1L-6 6Z" fill="#e84a30"/></g></svg>
<svg class="s" style="left:379.7px;top:181px;" width="20" height="20" viewBox="0 0 20 20"><g transform="translate(10,10) scale(0.85)"><g opacity="0.45"><rect x="-5" y="-6" width="11" height="9" rx="1" fill="#d8d8d0" stroke="#777766" stroke-width="1"/><circle cx="0.5" cy="-1.5" r="2.6" fill="none" stroke="#777766" stroke-width="1"/><rect x="-3" y="-7.5" width="4" height="2" fill="#777766"/><path d="M-1 7C-2 2 4 1 6 4" stroke="#6ac050" stroke-width="2.2" fill="none"/></g></g></svg>
<svg class="s" style="left:407.6px;top:181px;" width="20" height="20" viewBox="0 0 20 20"><g transform="translate(10,10) scale(0.85)"><rect x="-5" y="-6" width="11" height="9" rx="1" fill="#d8d8d0" stroke="#777766" stroke-width="1"/><circle cx="0.5" cy="-1.5" r="2.6" fill="none" stroke="#777766" stroke-width="1"/><rect x="-3" y="-7.5" width="4" height="2" fill="#777766"/><path d="M-8 -4V-8H-4M4 -8H8V-4M8 4V8H4M-4 8H-8V4" stroke="#777766" stroke-width="1" fill="none"/></g></svg>
<div class="t" style="left:440.3px;top:185.9px;font-size:10.5px;line-height:10.5px;font-weight:normal;color:#222;letter-spacing:0px;-webkit-text-stroke:0.2px;">3D</div>
<svg class="s" style="left:457.6px;top:181px;" width="20" height="20" viewBox="0 0 20 20"><g transform="translate(10,10) scale(0.85)"><rect x="-5" y="-6" width="11" height="9" rx="1" fill="#d8d8d0" stroke="#777766" stroke-width="1"/><circle cx="0.5" cy="-1.5" r="2.6" fill="none" stroke="#777766" stroke-width="1"/><rect x="-3" y="-7.5" width="4" height="2" fill="#777766"/><circle cx="4" cy="4" r="3.6" fill="#48c040"/><circle cx="3.8" cy="3.8" r="1.6" fill="none" stroke="#fff" stroke-width="0.9"/></g></svg>
<svg class="s" style="left:485.3px;top:181px;" width="20" height="20" viewBox="0 0 20 20"><g transform="translate(10,10) scale(1.0)"><rect x="-6" y="-6" width="11" height="11" fill="none" stroke="#555" stroke-width="1" stroke-dasharray="1.3 1.3"/><path d="M1 1L7 7L4.5 7.5L6 10L4 10.5L3 8L1 9.5Z" fill="#777"/><path d="M-3.5 -5V1M-6.5 -2H-0.5" stroke="#2a9a2a" stroke-width="1.8"/></g></svg>
<svg class="s" style="left:507.70000000000005px;top:181px;" width="20" height="20" viewBox="0 0 20 20"><g transform="translate(10,10) scale(1.0)"><rect x="-6" y="-6" width="11" height="11" fill="none" stroke="#555" stroke-width="1" stroke-dasharray="1.3 1.3"/><path d="M1 1L7 7L4.5 7.5L6 10L4 10.5L3 8L1 9.5Z" fill="#777"/><path d="M-6 -2H0" stroke="#e02020" stroke-width="1.8"/></g></svg>
<svg class="s" style="left:530px;top:181px;" width="20" height="20" viewBox="0 0 20 20"><g transform="translate(10,10) scale(1.0)"><rect x="-6" y="-6" width="11" height="11" fill="none" stroke="#555" stroke-width="1" stroke-dasharray="1.3 1.3"/><path d="M1 1L7 7L4.5 7.5L6 10L4 10.5L3 8L1 9.5Z" fill="#777"/><path d="M-3 -7V-2M-5.5 -4.5H-0.5" stroke="#2a9a2a" stroke-width="1.6"/><path d="M-6 1H0" stroke="#e02020" stroke-width="1.6"/></g></svg>
<svg class="s" style="left:557.5px;top:181px;" width="20" height="20" viewBox="0 0 20 20"><g transform="translate(10,10) scale(1.0)"><rect x="-6" y="-6" width="11" height="11" fill="none" stroke="#555" stroke-width="1" stroke-dasharray="1.3 1.3"/><path d="M1 1L7 7L4.5 7.5L6 10L4 10.5L3 8L1 9.5Z" fill="#777"/><path d="M-5 4L0 -4L5 4Z" fill="#8fd070" stroke="#6a9a50" stroke-width="0.7"/></g></svg>
<svg class="s" style="left:579.4px;top:181px;" width="20" height="20" viewBox="0 0 20 20"><g transform="translate(10,10) scale(1.0)"><rect x="-6" y="-6" width="11" height="11" fill="none" stroke="#555" stroke-width="1" stroke-dasharray="1.3 1.3"/><path d="M1 1L7 7L4.5 7.5L6 10L4 10.5L3 8L1 9.5Z" fill="#777"/><path d="M-5 4L0 -4L5 4Z" fill="none" stroke="#aaa" stroke-width="0.7"/><circle cx="0" cy="-4" r="1" fill="#e02020"/><circle cx="-5" cy="4" r="1" fill="#e02020"/></g></svg>
<svg class="s" style="left:601.5px;top:181px;" width="20" height="20" viewBox="0 0 20 20"><g transform="translate(10,10) scale(1.0)"><path d="M-7 -4L-2 -6H7V4L2 6H-7Z" fill="#9fd080" stroke="#6a9a50" stroke-width="0.8"/><path d="M2 0L7 6" stroke="#555" stroke-width="1.5"/></g></svg>
<svg class="s" style="left:623px;top:181px;" width="20" height="20" viewBox="0 0 20 20"><g transform="translate(10,10) scale(1.0)"><path d="M-7 -6V6L5 4V-4Z" fill="none" stroke="#888" stroke-width="0.8" stroke-dasharray="1.5 1"/><circle cx="-4" cy="-3" r="1" fill="#e02020"/><circle cx="-3" cy="2" r="1" fill="#e02020"/><circle cx="2" cy="-4" r="1" fill="#e02020"/><circle cx="5" cy="4" r="1" fill="#e02020"/><circle cx="-1" cy="0" r="1" fill="#e02020"/></g></svg>
<svg class="s" style="left:645.4px;top:181px;" width="20" height="20" viewBox="0 0 20 20"><g transform="translate(10,10) scale(1.0)"><path d="M-7 -6L0 -2L6 -6M-7 6L0 2L6 6M-7 -6V6" stroke="#4a7a3a" stroke-width="1" fill="none" stroke-dasharray="1.5 1"/><circle cx="-2" cy="0" r="2" fill="#6ac050"/></g></svg>
<svg class="s" style="left:667px;top:181px;" width="20" height="20" viewBox="0 0 20 20"><g transform="translate(10,10) scale(1.0)"><path d="M-7 -6L0 -2L6 -6M-7 6L0 2L6 6M-7 -6V6" stroke="#4a7a3a" stroke-width="1" fill="none" stroke-dasharray="1.5 1"/><circle cx="-4" cy="-2" r="1" fill="#e02020"/><circle cx="-3" cy="2" r="1" fill="#e02020"/><circle cx="1" cy="0" r="1" fill="#e02020"/><circle cx="-5" cy="0" r="1" fill="#e02020"/></g></svg>
<svg class="s" style="left:689px;top:181px;" width="20" height="20" viewBox="0 0 20 20"><g transform="translate(10,10) scale(1.0)"><rect x="-6" y="-6" width="11" height="11" fill="none" stroke="#999" stroke-width="0.8" stroke-dasharray="1.3 1.3"/><circle cx="0" cy="0" r="2.5" fill="none" stroke="#7ab860" stroke-width="1"/><path d="M2 2L6 6" stroke="#777" stroke-width="1.2"/></g></svg>
<svg class="s" style="left:711.6px;top:181px;" width="20" height="20" viewBox="0 0 20 20"><g transform="translate(10,10) scale(1.0)"><path d="M-6 4L-1 -5L4 4Z" fill="#8fd070" stroke="#6a9a50" stroke-width="0.7"/><path d="M1 1L6 7" stroke="#555" stroke-width="1.8"/></g></svg>
<svg class="s" style="left:733.8px;top:181px;" width="20" height="20" viewBox="0 0 20 20"><g transform="translate(10,10) scale(1.0)"><path d="M-6 4L-1 -5L4 4" fill="none" stroke="#bbb" stroke-width="0.7"/><circle cx="-1" cy="-5" r="1.1" fill="#e02020"/><circle cx="-6" cy="4" r="1.1" fill="#e02020"/><path d="M1 1L6 7" stroke="#555" stroke-width="1.8"/></g></svg>
<svg class="s" style="left:764px;top:181px;" width="20" height="20" viewBox="0 0 20 20"><g transform="translate(10,10) scale(1.0)"><path d="M-5 -4L-1 0L-5 4M0 -4L4 0L0 4" stroke="#444" stroke-width="1.8" fill="none"/></g></svg>
<div class="t" style="left:789.6px;top:185.0px;font-size:13px;line-height:13px;font-weight:bold;color:#000;letter-spacing:0.298px;-webkit-text-stroke:0.05px currentColor;text-decoration:underline;text-underline-offset:2px;">RenderView1</div>
<div class="r" style="left:885px;top:180px;width:22px;height:22px;background:linear-gradient(#f2f2dc,#e8e8c8);border:1px solid #cdc39a;"></div>
<div class="r" style="left:908px;top:180px;width:22px;height:22px;background:linear-gradient(#f2f2dc,#e8e8c8);border:1px solid #cdc39a;"></div>
<div class="r" style="left:931px;top:180px;width:22px;height:22px;background:linear-gradient(#f2f2dc,#e8e8c8);border:1px solid #cdc39a;"></div>
<div class="r" style="left:954px;top:180px;width:22px;height:22px;background:linear-gradient(#f2f2dc,#e8e8c8);border:1px solid #cdc39a;"></div>
<svg class="s" style="left:885px;top:180px;" width="22" height="22" viewBox="0 0 22 22"><rect x="6.5" y="5.5" width="9" height="11" fill="#fff" stroke="#000" stroke-width="1.4"/><path d="M11 5.5V16.5" stroke="#000" stroke-width="1.4"/><rect x="8" y="7" width="2" height="8" fill="#c8d4ff"/><rect x="12" y="7" width="2" height="8" fill="#c8d4ff"/></svg>
<svg class="s" style="left:908px;top:180px;" width="22" height="22" viewBox="0 0 22 22"><rect x="6.5" y="5.5" width="9" height="11" fill="#fff" stroke="#000" stroke-width="1.4"/><path d="M6.5 11H15.5" stroke="#000" stroke-width="1.4"/><rect x="8" y="7" width="6" height="3" fill="#c8d4ff"/><rect x="8" y="12" width="6" height="3" fill="#c8d4ff"/></svg>
<svg class="s" style="left:931px;top:180px;" width="22" height="22" viewBox="0 0 22 22"><rect x="6" y="6" width="10" height="10" fill="#f4f4dc" stroke="#000" stroke-width="1.3"/><rect x="6" y="5" width="10" height="2.5" fill="#000"/></svg>
<svg class="s" style="left:954px;top:180px;" width="22" height="22" viewBox="0 0 22 22"><circle cx="11" cy="11" r="5.2" fill="#555"/><path d="M9 9L13 13M13 9L9 13" stroke="#fff" stroke-width="1.5"/></svg>
<div class="r" style="left:978px;top:154px;width:2px;height:723px;background:#b8b8b8;"></div>
<div class="r" style="left:980px;top:154px;width:458px;height:723px;background:#ececec;"></div>
<div class="r" style="left:980px;top:153px;width:458px;height:23px;background:linear-gradient(#f0f0f0,#e3e3e3 50%,#cfcfcf);border-top:1px solid #fdfdfd;border-bottom:1px solid #9c9c9c;"></div>
<svg class="s" style="left:982px;top:157px;" width="14" height="14" viewBox="0 0 14 14"><circle cx="7" cy="7" r="6.8" fill="#4a4a4a"/><path d="M4.3 4.3L9.7 9.7M9.7 4.3L4.3 9.7" stroke="#fff" stroke-width="2" stroke-linecap="round"/></svg>
<svg class="s" style="left:1000px;top:157px;" width="14" height="14" viewBox="0 0 14 14"><circle cx="7" cy="7" r="6.8" fill="#4a4a4a"/><rect x="3.6" y="6" width="5" height="4" fill="none" stroke="#fff" stroke-width="1.2"/><path d="M5.6 4.3H10.4V8" fill="none" stroke="#fff" stroke-width="1.2"/></svg>
<div class="t" style="left:1026.0px;width:400px;text-align:center;top:159.5px;font-size:11px;line-height:11px;font-weight:normal;color:#111;letter-spacing:-0.066px">Information</div>
<div class="r" style="left:980px;top:176px;width:1px;height:701px;background:#c8c8c8;"></div>
<div class="r" style="left:1436px;top:176px;width:1px;height:701px;background:#a8a8a8;"></div>
<div class="r" style="left:1437px;top:176px;width:1px;height:701px;background:#d8d8d8;"></div>
<div class="t" style="left:1000.5px;top:179.7px;font-size:11px;line-height:11px;font-weight:normal;color:#1a1a1a;letter-spacing:0.408px;">Statistics</div>
<div class="r" style="left:993px;top:192px;width:432px;height:138px;background:#e3e3e3;border:1px solid #dcdcdc;border-radius:5px;"></div>
<div class="t" style="left:1000.5px;top:201.7px;font-size:13px;line-height:13px;font-weight:normal;color:#000;letter-spacing:0.176px;">Type:</div>
<div class="t" style="left:1060.7px;top:201.7px;font-size:13px;line-height:13px;font-weight:normal;color:#000;letter-spacing:0.362px;">Unstructured Grid</div>
<div class="t" style="left:1000.5px;top:236.6px;font-size:13px;line-height:13px;font-weight:normal;color:#000;letter-spacing:0.218px;">Number of Cells:</div>
<div class="t" style="left:1120.5px;top:236.6px;font-size:13px;line-height:13px;font-weight:normal;color:#000;letter-spacing:0.448px;">550</div>
<div class="t" style="left:1000.5px;top:271.8px;font-size:13px;line-height:13px;font-weight:normal;color:#000;letter-spacing:0.271px;">Number of Points:</div>
<div class="t" style="left:1120.5px;top:271.8px;font-size:13px;line-height:13px;font-weight:normal;color:#000;letter-spacing:0.448px;">367</div>
<div class="t" style="left:1000.5px;top:308.2px;font-size:13px;line-height:13px;font-weight:normal;color:#000;letter-spacing:0.173px;">Memory:</div>
<div class="t" style="left:1060.7px;top:308.2px;font-size:13px;line-height:13px;font-weight:normal;color:#000;letter-spacing:0.449px;">0.044 MB</div>
<div class="t" style="left:1000.5px;top:336.7px;font-size:11px;line-height:11px;font-weight:normal;color:#1a1a1a;letter-spacing:0.322px;">Data Arrays</div>
<div class="r" style="left:993px;top:350px;width:432px;height:152px;background:#e3e3e3;border:1px solid #dcdcdc;border-radius:5px;"></div>
<div class="r" style="left:1000px;top:356px;width:418px;height:139px;background:#fff;border:1px solid #9a9a9a;"></div>
<div class="r" style="left:1001px;top:357px;width:416px;height:16px;background:#f1f3dc;border-bottom:1px solid #d2d0a8;"></div>
<div class="r" style="left:1179px;top:359px;width:1px;height:12px;background:#dcdac0;"></div>
<div class="r" style="left:1244px;top:359px;width:1px;height:12px;background:#dcdac0;"></div>
<div class="t" style="left:1005.5px;top:359.4px;font-size:11px;line-height:11px;font-weight:normal;color:#000;letter-spacing:0.019px;">Name</div>
<div class="t" style="left:1184.3px;top:359.4px;font-size:11px;line-height:11px;font-weight:normal;color:#000;letter-spacing:0.329px;">Data Type</div>
<div class="t" style="left:1249.3px;top:359.4px;font-size:11px;line-height:11px;font-weight:normal;color:#000;letter-spacing:0.095px;">Data Ranges</div>
<svg class="s" style="left:1010px;top:379px;" width="10" height="10" viewBox="0 0 10 10"><ellipse cx="5" cy="5" rx="3.3" ry="2.8" fill="#f6c27a" stroke="#222" stroke-width="1"/></svg>
<div class="t" style="left:1028.5px;top:378.2px;font-size:13px;line-height:13px;font-weight:normal;color:#0e6a0e;letter-spacing:0.31px;">activation bipolar (ms)</div>
<div class="t" style="left:1185.6px;top:378.2px;font-size:13px;line-height:13px;font-weight:normal;color:#000;letter-spacing:0.287px;">double</div>
<div class="t" style="left:1250.6px;top:378.2px;font-size:13px;line-height:13px;font-weight:normal;color:#000;letter-spacing:0.329px;">[34.7014, 112.595]</div>
<svg class="s" style="left:1010px;top:399px;" width="10" height="10" viewBox="0 0 10 10"><ellipse cx="5" cy="5" rx="3.3" ry="2.8" fill="#f6c27a" stroke="#222" stroke-width="1"/></svg>
<div class="t" style="left:1028.5px;top:398.2px;font-size:13px;line-height:13px;font-weight:normal;color:#0e6a0e;letter-spacing:0.273px;">activation unipolar (ms)</div>
<div class="t" style="left:1185.6px;top:398.2px;font-size:13px;line-height:13px;font-weight:normal;color:#000;letter-spacing:0.287px;">double</div>
<div class="t" style="left:1250.6px;top:398.2px;font-size:13px;line-height:13px;font-weight:normal;color:#000;letter-spacing:0.05px;">[101, 107.522]</div>
<svg class="s" style="left:1010px;top:419px;" width="10" height="10" viewBox="0 0 10 10"><ellipse cx="5" cy="5" rx="3.3" ry="2.8" fill="#f6c27a" stroke="#222" stroke-width="1"/></svg>
<div class="t" style="left:1028.5px;top:418.2px;font-size:13px;line-height:13px;font-weight:normal;color:#0e6a0e;letter-spacing:0.381px;">cutout mask</div>
<div class="t" style="left:1185.6px;top:418.2px;font-size:13px;line-height:13px;font-weight:normal;color:#000;letter-spacing:0.287px;">double</div>
<div class="t" style="left:1250.6px;top:418.2px;font-size:13px;line-height:13px;font-weight:normal;color:#000;letter-spacing:0.579px;">[0, 0]</div>
<svg class="s" style="left:1010px;top:439px;" width="10" height="10" viewBox="0 0 10 10"><ellipse cx="5" cy="5" rx="3.3" ry="2.8" fill="#f6c27a" stroke="#222" stroke-width="1"/></svg>
<div class="t" style="left:1028.5px;top:438.2px;font-size:13px;line-height:13px;font-weight:normal;color:#0e6a0e;letter-spacing:0.281px;">voltage bipolar (mV)</div>
<div class="t" style="left:1185.6px;top:438.2px;font-size:13px;line-height:13px;font-weight:normal;color:#000;letter-spacing:0.287px;">double</div>
<div class="t" style="left:1250.6px;top:438.2px;font-size:13px;line-height:13px;font-weight:normal;color:#000;letter-spacing:0.443px;">[0.0162316, 0.0708072]</div>
<svg class="s" style="left:1010px;top:459px;" width="10" height="10" viewBox="0 0 10 10"><ellipse cx="5" cy="5" rx="3.3" ry="2.8" fill="#f6c27a" stroke="#222" stroke-width="1"/></svg>
<div class="t" style="left:1028.5px;top:458.2px;font-size:13px;line-height:13px;font-weight:normal;color:#0e6a0e;letter-spacing:0.26px;">voltage unipolar (mV)</div>
<div class="t" style="left:1185.6px;top:458.2px;font-size:13px;line-height:13px;font-weight:normal;color:#000;letter-spacing:0.287px;">double</div>
<div class="t" style="left:1250.6px;top:458.2px;font-size:13px;line-height:13px;font-weight:normal;color:#000;letter-spacing:0.419px;">[0.560179, 0.830157]</div>
<div class="t" style="left:1000.5px;top:502.2px;font-size:11px;line-height:11px;font-weight:normal;color:#1a1a1a;letter-spacing:0.231px;">Bounds</div>
<div class="r" style="left:993px;top:516px;width:432px;height:75px;background:#e3e3e3;border:1px solid #dcdcdc;border-radius:5px;"></div>
<div class="t" style="left:1000.5px;top:524.5px;font-size:13px;line-height:13px;font-weight:normal;color:#000;letter-spacing:-0.188px;">X Range:</div>
<div class="t" style="left:1061.4px;top:524.5px;font-size:13px;line-height:13px;font-weight:normal;color:#000;letter-spacing:0.449px;">55.8257 to 64.9088 (delta: 9.08311)</div>
<div class="t" style="left:1000.5px;top:546.8px;font-size:13px;line-height:13px;font-weight:normal;color:#000;letter-spacing:-0.155px;">Y Range:</div>
<div class="t" style="left:1061.4px;top:546.8px;font-size:13px;line-height:13px;font-weight:normal;color:#000;letter-spacing:0.476px;">-15.9003 to 4.03595 (delta: 19.9362)</div>
<div class="t" style="left:1000.5px;top:568.7px;font-size:13px;line-height:13px;font-weight:normal;color:#000;letter-spacing:-0.083px;">Z Range:</div>
<div class="t" style="left:1061.4px;top:568.7px;font-size:13px;line-height:13px;font-weight:normal;color:#000;letter-spacing:0.297px;">-137.549 to -118.938 (delta: 18.6117)</div>
<div class="t" style="left:1000.5px;top:591.5px;font-size:11px;line-height:11px;font-weight:normal;color:#1a1a1a;letter-spacing:0.156px;">Time</div>
<div class="r" style="left:993px;top:605px;width:432px;height:136px;background:#e3e3e3;border:1px solid #dcdcdc;border-radius:5px;"></div>
<div class="r" style="left:1000px;top:611px;width:418px;height:122px;background:#fff;border:1px solid #9a9a9a;"></div>
<div class="r" style="left:1001px;top:612px;width:416px;height:17px;background:#f1f3dc;border-bottom:1px solid #d2d0a8;"></div>
<div class="r" style="left:1100px;top:615px;width:1px;height:12px;background:#dcdac0;"></div>
<div class="t" style="left:1005.2px;top:614.3px;font-size:11px;line-height:11px;font-weight:normal;color:#000;letter-spacing:0.216px;">Index</div>
<div class="t" style="left:1105.4px;top:614.3px;font-size:11px;line-height:11px;font-weight:normal;color:#000;letter-spacing:0.189px;">Value</div>
</body></html>
